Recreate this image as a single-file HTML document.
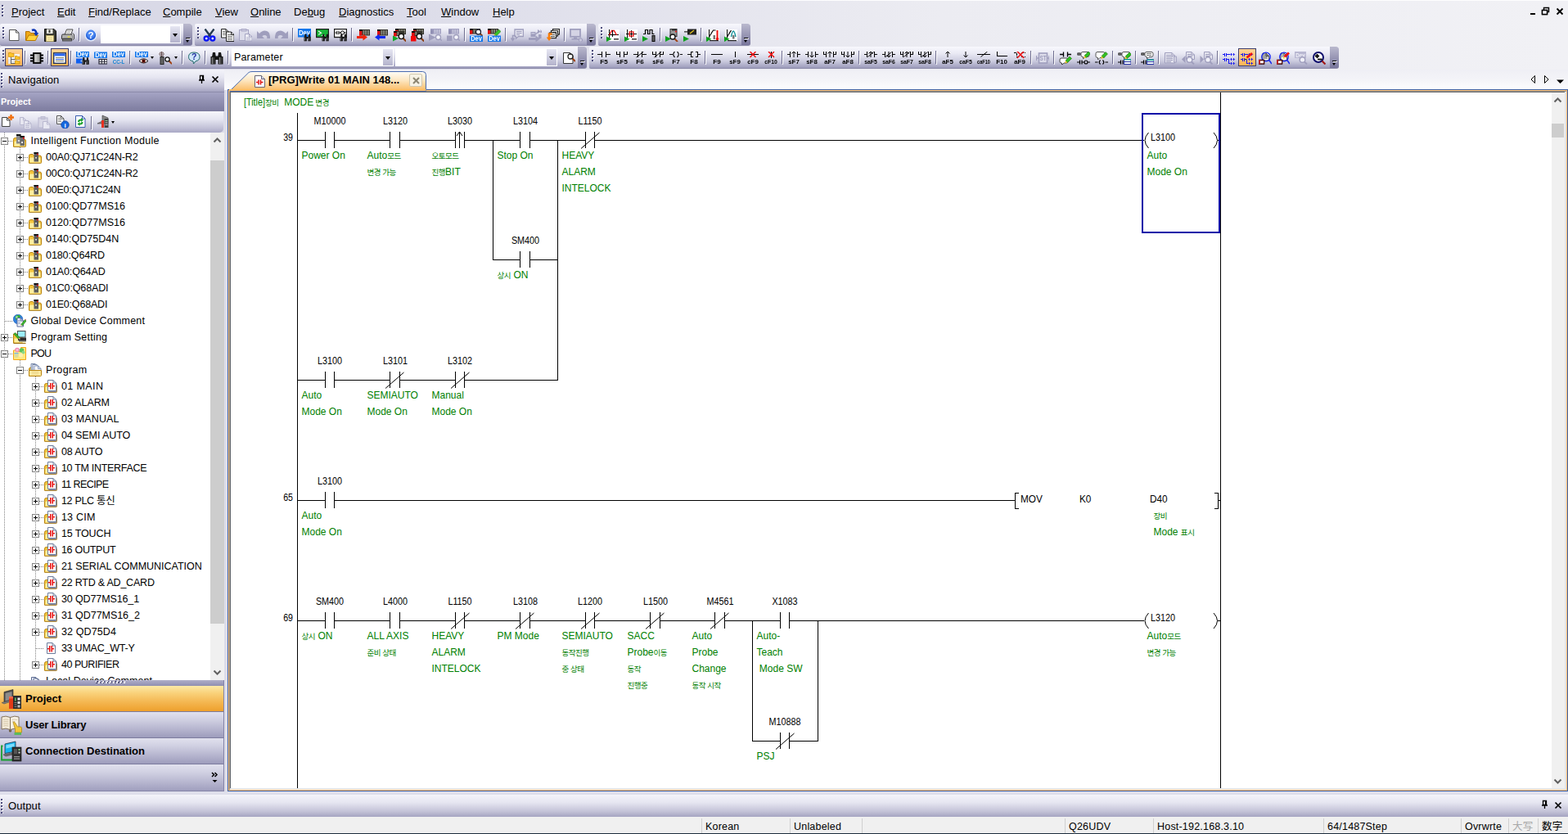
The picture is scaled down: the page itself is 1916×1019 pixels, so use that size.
<!DOCTYPE html><html><head><meta charset="utf-8"><title>MELSOFT GX Works2</title><style>
html,body{margin:0;padding:0}
body{width:1916px;height:1019px;overflow:hidden;position:relative;background:#dddde9;font-family:"Liberation Sans","Noto Sans CJK KR","Noto Sans CJK SC",sans-serif;font-size:12.5px;color:#000;-webkit-font-smoothing:antialiased}
div,span,svg{box-sizing:border-box}
.abs{position:absolute}
#dock{position:absolute;left:0;top:0;width:1916px;height:86px;border-top:1px solid #fdfdfe;background:linear-gradient(to right,#d7d7e5 0%,#dcdce9 25%,#ececf2 60%,#f1f1f5 100%)}
.menu{position:absolute;top:7px;font-size:13px;line-height:16px;white-space:nowrap}
.menu u{text-decoration:underline;text-underline-offset:.5px}
.grip{position:absolute;width:3px;background:repeating-linear-gradient(to bottom,#4c4c7c 0,#4c4c7c 2px,transparent 2px,transparent 4px) 0 0/2px 100% no-repeat,repeating-linear-gradient(to bottom,#fff 0,#fff 2px,transparent 2px,transparent 4px) 1px 1px/2px 100% no-repeat}
.tb{position:absolute;height:27px;border-radius:2px 3px 3px 2px;background:linear-gradient(to bottom,#f8f8fd 0%,#ebebf5 30%,#cbcbde 68%,#9c9bbb 100%);overflow:hidden;border-bottom:1px solid #8b8aa8}
.tb .ico{position:absolute;will-change:transform}
.sep{position:absolute;top:5px;width:1px;height:16px;background:#6e6d8f;margin-left:-1px}.sep:after{content:"";position:absolute;left:1px;top:1px;width:1px;height:16px;background:#fff}
.hot{position:absolute;top:2px;width:22px;height:22px;background:linear-gradient(to bottom,#ffd295,#ffb456);border:1px solid #3c3c6c}
.darr{position:absolute;width:0;height:0;border-style:solid;border-color:#000 transparent transparent transparent;border-width:3px 2.500px 0 2.500px}
.combo{position:absolute;top:2px;height:22px;background:#fff;border:1px solid #fff}
.combo span{position:absolute;left:2px;top:2px;font-size:12.5px;line-height:16px;letter-spacing:.15px}
.cbtn{position:absolute;right:0;top:0;width:12px;height:20px;background:linear-gradient(to bottom,#e6e6f2,#b4b3cc)}
.tbh{position:absolute;right:0;top:0;width:11px;height:27px;background:linear-gradient(to bottom,#bab9ce,#76749a);border-radius:0 3px 3px 0}
.tbhm{position:absolute;left:3px;top:17px;width:5px;height:1px;background:#000;box-shadow:1px 1px 0 #fff}
.tbhm:after{content:"";position:absolute;left:0;top:2.500px;border-style:solid;border-color:#000 transparent transparent transparent;border-width:3px 2.5px 0 2.5px}
#nav{position:absolute;left:0;top:85px;width:274px;height:882px}
.cap{position:absolute;background:linear-gradient(to bottom,#f4f4fa 0%,#e6e6f1 35%,#c4c3d8 75%,#a5a4c1 100%)}
.captxt{position:absolute;font-size:13px;line-height:16px;white-space:nowrap;letter-spacing:.1px}
#projband{position:absolute;left:0;top:27px;width:274px;height:24px;background:linear-gradient(to bottom,#a5a4c4,#7c7b9e);border-top:1px solid #8d8cab}
#projband span{position:absolute;left:1px;top:4px;color:#fff;font-weight:bold;font-size:10.8px;line-height:15px}
#minitb{position:absolute;left:0;top:51px;width:273px;height:26px;background:linear-gradient(to bottom,#f6f6fb 0%,#e4e4f0 40%,#c0bfd6 80%,#a9a8c5 100%);border-radius:0 0 5px 0;z-index:2}
#tree{position:absolute;left:0;top:77px;width:257px;height:669px;background:#fff;overflow:hidden}
.tl{position:absolute;font-size:12.5px;line-height:17px;white-space:nowrap;letter-spacing:.28px}
.vd{position:absolute;width:1px;background:repeating-linear-gradient(to bottom,#808080 0,#808080 1px,transparent 1px,transparent 2px)}
.hd{position:absolute;height:1px;background:repeating-linear-gradient(to right,#808080 0,#808080 1px,transparent 1px,transparent 2px)}
.xb{position:absolute;width:9px;height:9px;border:1px solid #848484;background:#fff}
.xb i{position:absolute;background:#000}
.xb i.h{left:1px;top:3px;width:5px;height:1px}
.xb i.v{left:3px;top:1px;width:1px;height:5px}
#tsb{position:absolute;left:257px;top:77px;width:17px;height:669px;background:#f0f0f0}
.thumb{position:absolute;background:#cdcdcd}
#split{position:absolute;left:0;top:746px;width:274px;height:7px;background:linear-gradient(to bottom,#b0afc9,#8f8eb0)}
.sgrip{position:absolute;left:117px;top:1px;width:36px;height:3px;background:repeating-linear-gradient(115deg,#fff 0,#fff 1.500px,#4a4a70 1.500px,#4a4a70 2.500px,transparent 2.500px,transparent 4px)}
.obtn{position:absolute;left:0;width:274px;height:32px;background:linear-gradient(to bottom,#e1e1ee 0%,#d0d0e2 30%,#b4b3cd 70%,#9d9cbc 100%);border-bottom:1px solid #7c7b9e}
.obtn.sel{background:linear-gradient(to bottom,#fce9a6 0%,#f9d078 30%,#f4b650 65%,#eea02c 100%)}
.obtn.last{height:33px;border-bottom:0}
.obtn span{position:absolute;left:31px;top:8px;font-weight:bold;font-size:13px;line-height:16px;white-space:nowrap}
#tabstrip{position:absolute;left:274px;top:85px;width:1642px;height:25px;background:linear-gradient(to bottom,#efeff5 0%,#f4f4f8 50%,#fdfdfe 100%)}
.tabtxt{z-index:4;position:absolute;left:328px;top:90px;font-weight:bold;font-size:13px;line-height:16px;white-space:nowrap}
.tabx{z-index:4;position:absolute;left:500px;top:90px;width:16px;height:16px;background:#f6f2e4;border:1px solid #cfc8b0;border-radius:2px}
.tabx svg{position:absolute;left:0.500px;top:0.500px}
#frame{position:absolute;left:278px;top:109px;width:1638px;height:858px;border:1px solid #3d62a8;background:#fdbe70;}
#frame:before{content:"";position:absolute;left:1px;top:1px;right:1px;bottom:1px;background:#e6e6e6;border-left:1px solid #8f8f8f;border-top:1px solid #8f8f8f}#frame:after{content:"";position:absolute;left:2px;top:2px;right:3px;bottom:3px;border-left:1px solid #696969;border-top:1px solid #696969}
#view{position:absolute;left:3px;top:3px;width:1614px;height:850px;z-index:1;background:#fff;overflow:hidden}
#vsb{position:absolute;left:1617px;top:3px;width:16px;height:850px;z-index:1;background:#f0f0f0}
#view span{position:absolute;white-space:nowrap;font-size:12px;line-height:14px}
.dv{transform:translateX(-50%) scaleX(.9);color:#000}
.dl{transform:scaleX(.9);transform-origin:0 0;color:#000}
.dn{transform:scaleX(.98);transform-origin:0 0}
.sn{width:28px;text-align:right;transform:scaleX(.88);transform-origin:100% 0}
.cm{color:#008000}
.cm .k,.cm b{font-weight:normal;font-size:9.500px;font-family:"Liberation Sans","Noto Sans CJK KR","NanumGothic",sans-serif;letter-spacing:-.45px}
.cm .nr{font-style:normal;display:inline-block;transform:scaleX(.9);transform-origin:0 0;margin-right:-3px}
svg .aa{shape-rendering:geometricPrecision;fill:none;stroke:#000;stroke-width:1}
#cursor{position:absolute;width:96px;height:147px;border:2px solid #0a0aa8}
#gap{position:absolute;left:0;top:967px;width:1916px;height:4px;background:#dfdfeb}
#status{position:absolute;left:0;top:998px;width:1916px;height:21px;background:#f0f0f0;border-bottom:1px solid #1c2c3c}
.ssep{position:absolute;top:2px;width:1px;height:18px;background:#d0d0d0}
.st{position:absolute;top:4px;font-size:12.500px;line-height:16px;white-space:nowrap;letter-spacing:.2px}
.st.dis{color:#a8a8a8}

</style></head><body>
<div id="dock"></div>
<div class="grip" style="left:2px;top:6px;height:14px"></div>
<div class="menu" style="left:14px"><u>P</u>roject</div>
<div class="menu" style="left:70px"><u>E</u>dit</div>
<div class="menu" style="left:108px"><u>F</u>ind/Replace</div>
<div class="menu" style="left:199px"><u>C</u>ompile</div>
<div class="menu" style="left:263px"><u>V</u>iew</div>
<div class="menu" style="left:306px"><u>O</u>nline</div>
<div class="menu" style="left:359px">De<u>b</u>ug</div>
<div class="menu" style="left:414px"><u>D</u>iagnostics</div>
<div class="menu" style="left:497px"><u>T</u>ool</div>
<div class="menu" style="left:539px"><u>W</u>indow</div>
<div class="menu" style="left:602px"><u>H</u>elp</div>
<svg class="abs" style="left:1866px;top:6px" width="48" height="16" viewBox="0 0 48 16"><rect x="4" y="10" width="6" height="2" fill="#000"/><path d="M20.5 3.5h6v5h-6z M18.5 6.5h6v5h-6z" fill="none" stroke="#000" stroke-width="1.4"/><rect x="18.5" y="6.5" width="6" height="5" fill="#f0f0f5" stroke="#000" stroke-width="1.4"/><path d="M36.5 4.5l7 7M43.5 4.5l-7 7" stroke="#000" stroke-width="1.8"/></svg>
<div class="tb" style="left:0px;top:29px;width:235px">
<div class="grip" style="left:3px;top:4px;height:14px"></div>
<svg class="ico" style="left:10px;top:6px" width="16" height="16" viewBox="0 0 16 16"><path d="M1.5 1.5h8l3.5 3.5v9.5h-11.5z" stroke="#555" stroke-width="1" fill="#fff" /><path d="M9.5 1.5v3.5h3.5" stroke="#555" stroke-width="1" fill="none" /></svg>
<svg class="ico" style="left:31px;top:6px" width="16" height="16" viewBox="0 0 16 16"><path d="M.5 14.5V3.5h4.5l1.500 2H11v2.500" stroke="#b07000" stroke-width="1" fill="#f0a818" /><path d="M.8 14.5l3.200-6.500h11.500l-3.200 6.500z" stroke="#b87800" stroke-width="1" fill="#ffd23c" /><path d="M8 2q4.500-1.800 5.500 3.500" stroke="#0a34b4" stroke-width="2.6" fill="none" /><path d="M10.300 5l6 .3l-3.300 4z" stroke="none" stroke-width="0" fill="#0a34b4" /></svg>
<svg class="ico" style="left:53px;top:6px" width="16" height="16" viewBox="0 0 16 16"><path d="M1.500 .5h11.500l2.500 2.500v12.500h-14z" stroke="#111" stroke-width="1" fill="#3a3a34" /><rect x="4" y="0.5" width="7.5" height="5.5" fill="#f0f0ea" /><rect x="6.5" y="1.5" width="2" height="3.5" fill="#3a3a34" /><rect x="3.5" y="8.5" width="9" height="7" fill="#fff0b4" stroke="#b8a860" stroke-width="0.7" /><rect x="5" y="10.5" width="6" height="1" fill="#d8c880" /><rect x="5" y="12.7" width="6" height="1" fill="#d8c880" /></svg>
<svg class="ico" style="left:75px;top:6px" width="16" height="16" viewBox="0 0 16 16"><path d="M4 7.500l2.500-6.500h7.500l-2.500 6.500" stroke="#444" stroke-width="1" fill="#fff" /><path d="M7 3h4.500M6.300 5h4.500" stroke="#999" stroke-width="0.9" fill="none" /><path d="M.5 8.500q0-1.500 1.500-1.500h10q1.500 0 1.500 1.500v4h-13z" stroke="#333" stroke-width="1" fill="#b4b4b4" /><rect x="1.5" y="12.5" width="11" height="2.5" fill="#7c7c7c" stroke="#333" stroke-width="0.8" /><rect x="7.5" y="9.5" width="3" height="1.3" fill="#f4ec10" /><path d="M13.500 5.500l2 1.500v5.500l-2 1.500" stroke="#444" stroke-width="1" fill="#d0d0d0" /><rect x="2" y="10.8" width="10" height="1" fill="#888" /></svg>
<div class="sep" style="left:97px"></div>
<svg class="ico" style="left:103px;top:6px" width="16" height="16" viewBox="0 0 16 16"><circle cx="8" cy="8" r="6.8" fill="#2a66dc" stroke="#e4ecfc" stroke-width="1.3"/><circle cx="8" cy="6.5" r="5" fill="#4a86f0"/><text x="8" y="12.3" font-size="11.5" font-weight="bold" fill="#fff" text-anchor="middle" font-family="Liberation Sans,sans-serif" >?</text></svg>
<div class="combo" style="left:123px;width:98px"><span></span><div class="cbtn"><div class="darr" style="left:3px;top:9px;border-width:4px 3.5px 0 3.5px"></div></div></div>
<div class="tbh"><div class="tbhm"></div></div>
</div>
<div class="tb" style="left:238px;top:29px;width:490px">
<div class="grip" style="left:3px;top:4px;height:14px"></div>
<svg class="ico" style="left:10px;top:6px" width="16" height="16" viewBox="0 0 16 16"><path d="M2.500 .5L9.200 9.500M13.500 .5L6.800 9.500" stroke="#22384e" stroke-width="2.3" fill="none" /><circle cx="4.2" cy="12" r="2.6" fill="#dfe3ff" stroke="#0a14f4" stroke-width="2.2"/><circle cx="11.8" cy="12" r="2.6" fill="#dfe3ff" stroke="#0a14f4" stroke-width="2.2"/></svg>
<svg class="ico" style="left:32px;top:6px" width="16" height="16" viewBox="0 0 16 16"><path d="M0.5 0.5h5.5l3.5 3.5v7.0h-9.0z" stroke="#222" stroke-width="1" fill="#fff" /><path d="M6.0 0.5v3.5h3.5" stroke="#222" stroke-width="1" fill="none" /><path d="M2 3.500h3M2 5.500h5M2 7.500h5" stroke="#666" stroke-width="0.9" fill="none" /><path d="M6.5 4.0h6l3.5 3.5v8.0h-9.5z" stroke="#222" stroke-width="1" fill="#fff" /><path d="M12.5 4.0v3.5h3.5" stroke="#222" stroke-width="1" fill="none" /><path d="M8 7.500h4M8 9.500h6M8 11.500h6M8 13.500h6" stroke="#666" stroke-width="0.9" fill="none" /></svg>
<svg class="ico" style="left:54px;top:6px" width="16" height="16" viewBox="0 0 16 16"><rect x="0.5" y="1.5" width="11" height="13" fill="#dcdcea" stroke="#a5a4c2" stroke-width="1" /><rect x="3" y="0.5" width="6" height="2.5" fill="#c8c7dc" stroke="#a5a4c2" stroke-width="0.8" /><path d="M7.5 6.5h5l3.5 3.5v5.0h-8.5z" stroke="#a5a4c2" stroke-width="1" fill="#ececf4" /><path d="M12.5 6.5v3.5h3.5" stroke="#a5a4c2" stroke-width="1" fill="none" /><rect x="9" y="10.5" width="5" height="1" fill="#b4b3cc" /><rect x="9" y="12.5" width="5" height="1" fill="#b4b3cc" /></svg>
<svg class="ico" style="left:76px;top:6px" width="16" height="16" viewBox="0 0 16 16"><path d="M0 3V12H9L6.300 9.300Q9.500 6.800 12.300 9.500V12H16V9.500Q15.500 2.500 9.500 2.500Q5.800 2.500 3 6z" stroke="none" stroke-width="0" fill="#9f9ebd" /></svg>
<svg class="ico" style="left:98px;top:6px" width="16" height="16" viewBox="0 0 16 16"><path d="M16 3V12H7L9.700 9.300Q6.500 6.800 3.700 9.500V12H0V9.500Q.5 2.500 6.500 2.500Q10.200 2.500 13 6z" stroke="none" stroke-width="0" fill="#9f9ebd" /></svg>
<div class="sep" style="left:120px"></div>
<svg class="ico" style="left:126px;top:6px" width="16" height="16" viewBox="0 0 16 16"><rect x="0" y="0" width="16" height="10.5" fill="#1478ec" /><text x="8.0" y="7.6" font-size="8.6" font-weight="bold" fill="#fff" text-anchor="middle" font-family="Liberation Sans,sans-serif" textLength="13.5" lengthAdjust="spacingAndGlyphs">Dev</text><rect x="7.5" y="9.8" width="3.4" height="5.5" fill="#161616" /><rect x="12.3" y="9.8" width="3.4" height="5.5" fill="#161616" /><rect x="8.2" y="6.8" width="2.2" height="3.5" fill="#161616" /><rect x="12.8" y="6.8" width="2.2" height="3.5" fill="#161616" /><rect x="10.5" y="10.0" width="2.2" height="2.2" fill="#161616" /><rect x="8.1" y="10.8" width="0.9" height="3.6" fill="#6a6a6a" /><rect x="12.9" y="10.8" width="0.9" height="3.6" fill="#6a6a6a" /></svg>
<svg class="ico" style="left:148px;top:6px" width="16" height="16" viewBox="0 0 16 16"><rect x="0.5" y="0.5" width="15" height="10" fill="#18b438" stroke="#1c1c1c" stroke-width="1.4" /><path d="M3 3l3.500 2.200l-3.500 2.200M7 8.300h4" stroke="#fff" stroke-width="1.1" fill="none" /><rect x="7.5" y="9.8" width="3.4" height="5.5" fill="#161616" /><rect x="12.3" y="9.8" width="3.4" height="5.5" fill="#161616" /><rect x="8.2" y="6.8" width="2.2" height="3.5" fill="#161616" /><rect x="12.8" y="6.8" width="2.2" height="3.5" fill="#161616" /><rect x="10.5" y="10.0" width="2.2" height="2.2" fill="#161616" /><rect x="8.1" y="10.8" width="0.9" height="3.6" fill="#6a6a6a" /><rect x="12.9" y="10.8" width="0.9" height="3.6" fill="#6a6a6a" /></svg>
<svg class="ico" style="left:170px;top:6px" width="16" height="16" viewBox="0 0 16 16"><rect x="0.5" y="0.5" width="15" height="10" fill="#fff" stroke="#1c1c1c" stroke-width="1.4" /><path d="M1.500 5h2M3.800 2.800v4.400M6 2.800v4.400M6 5h2.200M12.800 5h2" stroke="#000" stroke-width="1" fill="none" /><circle cx="10.5" cy="5" r="2.1" fill="none" stroke="#000" stroke-width="1"/><rect x="7.5" y="9.8" width="3.4" height="5.5" fill="#161616" /><rect x="12.3" y="9.8" width="3.4" height="5.5" fill="#161616" /><rect x="8.2" y="6.8" width="2.2" height="3.5" fill="#161616" /><rect x="12.8" y="6.8" width="2.2" height="3.5" fill="#161616" /><rect x="10.5" y="10.0" width="2.2" height="2.2" fill="#161616" /><rect x="8.1" y="10.8" width="0.9" height="3.6" fill="#6a6a6a" /><rect x="12.9" y="10.8" width="0.9" height="3.6" fill="#6a6a6a" /></svg>
<div class="sep" style="left:192px"></div>
<svg class="ico" style="left:198px;top:6px" width="16" height="16" viewBox="0 0 16 16"><rect x="3" y="1" width="13" height="7.5" fill="#34342c" /><rect x="3" y="2.5" width="3.4" height="6.0" fill="#e01010" /><rect x="3" y="1" width="3.4" height="1.8" fill="#000" /><rect x="7.6" y="2" width="1.7" height="5.5" fill="#8c8c80" /><rect x="10.3" y="2" width="1.7" height="5.5" fill="#8c8c80" /><rect x="13" y="2" width="1.7" height="5.5" fill="#8c8c80" /><path d="M0 10.500h8" stroke="#f02408" stroke-width="3" fill="none" /><path d="M7.500 6.500l5.500 4l-5.500 4z" stroke="none" stroke-width="0" fill="#f02408" /></svg>
<svg class="ico" style="left:220px;top:6px" width="16" height="16" viewBox="0 0 16 16"><rect x="3" y="1" width="13" height="7.5" fill="#34342c" /><rect x="3" y="2.5" width="3.4" height="6.0" fill="#e01010" /><rect x="3" y="1" width="3.4" height="1.8" fill="#000" /><rect x="7.6" y="2" width="1.7" height="5.5" fill="#8c8c80" /><rect x="10.3" y="2" width="1.7" height="5.5" fill="#8c8c80" /><rect x="13" y="2" width="1.7" height="5.5" fill="#8c8c80" /><path d="M13 10.500h-8" stroke="#0c2cf0" stroke-width="3" fill="none" /><path d="M5.500 6.500l-5.500 4l5.500 4z" stroke="none" stroke-width="0" fill="#0c2cf0" /></svg>
<svg class="ico" style="left:242px;top:6px" width="16" height="16" viewBox="0 0 16 16"><rect x="3" y="0" width="13" height="7" fill="#34342c" /><rect x="3" y="1.5" width="3.4" height="5.5" fill="#e01010" /><rect x="3" y="0" width="3.4" height="1.8" fill="#000" /><rect x="7.6" y="1" width="1.7" height="5" fill="#8c8c80" /><rect x="10.3" y="1" width="1.7" height="5" fill="#8c8c80" /><rect x="13" y="1" width="1.7" height="5" fill="#8c8c80" /><rect x="1" y="3" width="13" height="6" fill="#34342c" /><rect x="1" y="4.5" width="3.6" height="5" fill="#e01010" /><rect x="1" y="3" width="3.6" height="1.8" fill="#000" /><rect x="5.5" y="4" width="1.7" height="4" fill="#8c8c80" /><path d="M0 8.5l7 3.5l-7 3.5z" stroke="none" stroke-width="0" fill="#10a828" /><path d="M12.47 11.67L16.4 15.6" stroke="#8a3c10" stroke-width="2" fill="none" /><circle cx="10.3" cy="9.5" r="3.1" fill="#fff" stroke="#111" stroke-width="1.3"/></svg>
<svg class="ico" style="left:264px;top:6px" width="16" height="16" viewBox="0 0 16 16"><rect x="3" y="0" width="13" height="7" fill="#34342c" /><rect x="3" y="1.5" width="3.4" height="5.5" fill="#e01010" /><rect x="3" y="0" width="3.4" height="1.8" fill="#000" /><rect x="7.6" y="1" width="1.7" height="5" fill="#8c8c80" /><rect x="10.3" y="1" width="1.7" height="5" fill="#8c8c80" /><rect x="13" y="1" width="1.7" height="5" fill="#8c8c80" /><rect x="1" y="3" width="13" height="6" fill="#34342c" /><rect x="1" y="4.5" width="3.6" height="5" fill="#e01010" /><rect x="1" y="3" width="3.6" height="1.8" fill="#000" /><rect x="5.5" y="4" width="1.7" height="4" fill="#8c8c80" /><rect x="0" y="9" width="6.5" height="6.5" fill="#f40808" /><path d="M12.47 11.67L16.4 15.6" stroke="#8a3c10" stroke-width="2" fill="none" /><circle cx="10.3" cy="9.5" r="3.1" fill="#fff" stroke="#111" stroke-width="1.3"/></svg>
<svg class="ico" style="left:286px;top:6px" width="16" height="16" viewBox="0 0 16 16"><rect x="2" y="0" width="13" height="6.5" fill="#a3a2c2" /><rect x="2" y="1.5" width="3.4" height="5.0" fill="#9190b4" /><rect x="6.6" y="1" width="1.7" height="4.5" fill="#c4c3d9" /><rect x="9.3" y="1" width="1.7" height="4.5" fill="#c4c3d9" /><rect x="12" y="1" width="1.7" height="4.5" fill="#c4c3d9" /><path d="M0 6.5l8.5 4.25l-8.5 4.25z" stroke="none" stroke-width="0" fill="#9f9ebd" /><path d="M6 10.500h3" stroke="#9f9ebd" stroke-width="1" fill="none" /><circle cx="11.5" cy="10.5" r="3" fill="#f4f4fa" stroke="#9f9ebd" stroke-width="1.3"/><path d="M13.800 12.800l2 2" stroke="#9f9ebd" stroke-width="1.5" fill="none" /></svg>
<svg class="ico" style="left:308px;top:6px" width="16" height="16" viewBox="0 0 16 16"><rect x="2" y="0" width="13" height="6.5" fill="#a3a2c2" /><rect x="2" y="1.5" width="3.4" height="5.0" fill="#9190b4" /><rect x="6.6" y="1" width="1.7" height="4.5" fill="#c4c3d9" /><rect x="9.3" y="1" width="1.7" height="4.5" fill="#c4c3d9" /><rect x="12" y="1" width="1.7" height="4.5" fill="#c4c3d9" /><rect x="0" y="8.5" width="6.5" height="6.5" fill="#9f9ebd" /><circle cx="11.5" cy="10.5" r="3" fill="#f4f4fa" stroke="#9f9ebd" stroke-width="1.3"/><path d="M13.800 12.800l2 2" stroke="#9f9ebd" stroke-width="1.5" fill="none" /></svg>
<div class="sep" style="left:330px"></div>
<svg class="ico" style="left:336px;top:6px" width="16" height="16" viewBox="0 0 16 16"><rect x="0" y="0" width="13" height="6.5" fill="#34342c" /><rect x="0" y="1.5" width="3.4" height="5.0" fill="#e01010" /><rect x="0" y="0" width="3.4" height="1.8" fill="#000" /><rect x="4.6" y="1" width="1.7" height="4.5" fill="#8c8c80" /><rect x="7.3" y="1" width="1.7" height="4.5" fill="#8c8c80" /><rect x="10" y="1" width="1.7" height="4.5" fill="#8c8c80" /><path d="M12.6 6.1L16.5 10" stroke="#8a3c10" stroke-width="2" fill="none" /><circle cx="10.5" cy="4" r="3" fill="#fff" stroke="#223" stroke-width="1.3"/><rect x="0" y="8.5" width="16" height="7.5" fill="#1478ec" /><text x="8.0" y="15.4" font-size="8.4" font-weight="bold" fill="#fff" text-anchor="middle" font-family="Liberation Sans,sans-serif" textLength="13.5" lengthAdjust="spacingAndGlyphs">Dev</text></svg>
<svg class="ico" style="left:358px;top:6px" width="16" height="16" viewBox="0 0 16 16"><rect x="0" y="0" width="13" height="6.5" fill="#34342c" /><rect x="0" y="1.5" width="3.4" height="5.0" fill="#e01010" /><rect x="0" y="0" width="3.4" height="1.8" fill="#000" /><rect x="4.6" y="1" width="1.7" height="4.5" fill="#8c8c80" /><rect x="7.3" y="1" width="1.7" height="4.5" fill="#8c8c80" /><rect x="10" y="1" width="1.7" height="4.5" fill="#8c8c80" /><path d="M8 6.500l5.500-5.500l2.500 2.500l-5.500 5.500z" stroke="#1c6c10" stroke-width="0.5" fill="#38c428" /><path d="M8 6.500l2.500 2.500l-3.300 .8z" stroke="none" stroke-width="0" fill="#e8c020" /><rect x="0" y="8.5" width="16" height="7.5" fill="#1478ec" /><text x="8.0" y="15.4" font-size="8.4" font-weight="bold" fill="#fff" text-anchor="middle" font-family="Liberation Sans,sans-serif" textLength="13.5" lengthAdjust="spacingAndGlyphs">Dev</text></svg>
<div class="sep" style="left:380px"></div>
<svg class="ico" style="left:386px;top:6px" width="16" height="16" viewBox="0 0 16 16"><path d="M5 1h10.500v8.500h-6l-3 2.500v-2.500h-1.500z" stroke="#9f9ebd" stroke-width="1.3" fill="#e6e6f0" /><path d="M7 3.500h6.500M7 5.500h6.500M7 7.500h4" stroke="#9f9ebd" stroke-width="1.2" fill="none" /><path d="M6 8.500h-3.500v5M.5 11.500l2 3l2-3" stroke="#9f9ebd" stroke-width="1.5" fill="none" /></svg>
<svg class="ico" style="left:408px;top:6px" width="16" height="16" viewBox="0 0 16 16"><rect x="2.5" y="4" width="6" height="6" fill="#9f9ebd" /><rect x="3.5" y="5" width="4" height="1.5" fill="#c8c7dc" /><path d="M11 1l3.500 2.500l-3.500 2.500zM14.500 1l2 2.500l-2 2.500z" stroke="none" stroke-width="0" fill="#9f9ebd" /><rect x="12" y="7" width="3.5" height="5" fill="#9f9ebd" /><path d="M8 7l4-3" stroke="#9f9ebd" stroke-width="1.5" fill="none" /><path d="M0 12.500h9" stroke="#9f9ebd" stroke-width="3" fill="none" /><path d="M8.500 8.500l5.500 4l-5.500 4z" stroke="none" stroke-width="0" fill="#9f9ebd" /></svg>
<svg class="ico" style="left:430px;top:6px" width="16" height="16" viewBox="0 0 16 16"><rect x="7.5" y="0.5" width="8" height="6.5" fill="#fff" stroke="#222" stroke-width="1.2" /><rect x="5.5" y="2.5" width="8" height="6.5" fill="#fff" stroke="#222" stroke-width="1.2" /><path d="M7 2.500h7M7 4.500h5" stroke="#444" stroke-width="1" fill="none" /><rect x="3.5" y="5" width="8" height="6.5" fill="#fff" stroke="#222" stroke-width="1.2" /><path d="M5 7.500h5M5 9.500h5" stroke="#555" stroke-width="1" fill="none" /><path d="M6.500 6.500h-3.500v5.500" stroke="#f87c08" stroke-width="2.6" fill="none" /><path d="M-.3 10.500h6.600l-3.300 4.500z" stroke="none" stroke-width="0" fill="#f87c08" /></svg>
<div class="sep" style="left:452px"></div>
<svg class="ico" style="left:458px;top:6px" width="16" height="16" viewBox="0 0 16 16"><rect x="1" y="0.8" width="12" height="9" fill="#d4d3e4" stroke="#9f9ebd" stroke-width="1.8" /><rect x="5" y="10.5" width="4" height="1.5" fill="#9f9ebd" /><rect x="2.5" y="12" width="9" height="1.6" fill="#9f9ebd" /><path d="M11 12.500q2.500-1 4 0" stroke="#9f9ebd" stroke-width="1" fill="none" /><circle cx="13.5" cy="14" r="2.2" fill="#c8c7dc" stroke="#9f9ebd" stroke-width="1"/></svg>
<div class="tbh"><div class="tbhm"></div></div>
</div>
<div class="tb" style="left:731px;top:29px;width:186px">
<div class="grip" style="left:3px;top:4px;height:14px"></div>
<svg class="ico" style="left:10px;top:6px" width="16" height="16" viewBox="0 0 16 16"><rect x="1" y="1" width="15" height="14" fill="#fff" /><path d="M3.5 1v13M2 7.5h13" stroke="#000" stroke-width="1" fill="none" /><path d="M3.5 8l3-5.5h3l3 5.5" stroke="#f01010" stroke-width="1.3" fill="none" /><path d="M7.5 2v8" stroke="#000" stroke-width="1" fill="none" /><path d="M0 9.5l6.5 3.25l-6.5 3.25z" stroke="none" stroke-width="0" fill="#10a020" /><rect x="9" y="12" width="6" height="1.6" fill="#444" /></svg>
<svg class="ico" style="left:32px;top:6px" width="16" height="16" viewBox="0 0 16 16"><rect x="1" y="1" width="15" height="14" fill="#fff" /><path d="M3.5 1v13M2 6.5h13M8.5 2v9" stroke="#000" stroke-width="1" fill="none" /><rect x="6" y="4" width="5" height="5" fill="none" stroke="#f01010" stroke-width="1.3" /><path d="M0 9.5l6.5 3.25l-6.5 3.25z" stroke="none" stroke-width="0" fill="#10a020" /><rect x="9" y="12" width="6" height="1.6" fill="#444" /></svg>
<svg class="ico" style="left:54px;top:6px" width="16" height="16" viewBox="0 0 16 16"><path d="M1 6.5h2.5v-5h3v5h2.5v-5h3v5h2.5" stroke="#000" stroke-width="1.2" fill="none" /><path d="M0 9l7 3.5l-7 3.5z" stroke="none" stroke-width="0" fill="#10a020" /><rect x="12" y="8.5" width="3" height="7" fill="#666" stroke="#000" stroke-width="1" /></svg>
<div class="sep" style="left:76px"></div>
<svg class="ico" style="left:82px;top:6px" width="16" height="16" viewBox="0 0 16 16"><rect x="6" y="0.5" width="8" height="9" fill="#999" stroke="#333" stroke-width="1" /><rect x="8" y="0.5" width="6" height="2" fill="#333" /><circle cx="13" cy="3.5" r="1" fill="#f01010"/><path d="M0 9l7 3.5l-7 3.5z" stroke="none" stroke-width="0" fill="#10a020" /><path d="M11.1 12.1L15 16" stroke="#a04010" stroke-width="2" fill="none" /><circle cx="9" cy="10" r="3" fill="#fff" stroke="#111" stroke-width="1.3"/></svg>
<svg class="ico" style="left:104px;top:6px" width="16" height="16" viewBox="0 0 16 16"><rect x="5" y="0.5" width="11" height="7" fill="#222" /><path d="M8 6l5-4" stroke="#e0c020" stroke-width="1.4" fill="none" /><rect x="1" y="3" width="4" height="1.6" fill="#555" /><path d="M0 9l7 3.5l-7 3.5z" stroke="none" stroke-width="0" fill="#10a020" /></svg>
<div class="sep" style="left:126px"></div>
<svg class="ico" style="left:132px;top:6px" width="16" height="16" viewBox="0 0 16 16"><rect x="1" y="1" width="15" height="14" fill="#fff" /><path d="M3.5 1v13" stroke="#000" stroke-width="1" fill="none" /><path d="M3.5 10l5-8h3" stroke="#000" stroke-width="1.2" fill="none" /><rect x="8.5" y="8" width="2.5" height="5" fill="#777" /><path d="M13.5 2v9" stroke="#f01010" stroke-width="2" fill="none" /><circle cx="13.5" cy="12.5" r="1.8" fill="#f01010"/><path d="M0 9.5l6.5 3.25l-6.5 3.25z" stroke="none" stroke-width="0" fill="#10a020" /><rect x="4" y="14" width="11" height="1.2" fill="#222" /></svg>
<svg class="ico" style="left:154px;top:6px" width="16" height="16" viewBox="0 0 16 16"><rect x="1" y="1" width="15" height="14" fill="#fff" /><path d="M3.5 1v13" stroke="#000" stroke-width="1" fill="none" /><path d="M3.5 10l5-8" stroke="#000" stroke-width="1.2" fill="none" /><path d="M8.5 10q2.5-14 5.5 0" stroke="#10909a" stroke-width="1.4" fill="none" /><rect x="10" y="8" width="2.5" height="4.5" fill="#777" /><path d="M0 9.5l6.5 3.25l-6.5 3.25z" stroke="none" stroke-width="0" fill="#10a020" /><rect x="4" y="14" width="11" height="1.2" fill="#222" /></svg>
<div class="tbh"><div class="tbhm"></div></div>
</div>
<div class="tb" style="left:0px;top:57px;width:717px">
<div class="grip" style="left:3px;top:4px;height:14px"></div>
<div class="hot" style="left:6px"></div>
<svg class="ico" style="left:9px;top:6px" width="16" height="16" viewBox="0 0 16 16"><rect x="1" y="3" width="14" height="12" fill="#f4f4f4" /><rect x="1" y="9" width="14" height="6" fill="#e4e4e4" /><path d="M4.500 6v8.500h5M4.500 9h5" stroke="#666" stroke-width="1" fill="none" shape-rendering="crispEdges"/><path d="M1.500 1.500h3l.8 .8h2.700v4.200h-6.500z" stroke="#c88a08" stroke-width="0.7" fill="#ffc428" /><path d="M9.500 5.500h2.500l.6 .8h2.400v3.200h-5.500z" stroke="#c88a08" stroke-width="0.7" fill="#ffc428" /><path d="M9.500 11h2.500l.6 .8h2.400v3.200h-5.500z" stroke="#c88a08" stroke-width="0.7" fill="#ffc428" /></svg>
<div class="sep" style="left:31px"></div>
<svg class="ico" style="left:37px;top:6px" width="16" height="16" viewBox="0 0 16 16"><rect x="4" y="2" width="8.5" height="12" fill="#a8a8a8" stroke="#000" stroke-width="1.8" /><rect x="5.5" y="3.5" width="3" height="9" fill="#c8c8c8" /><path d="M0 4.500h3.500M0 8h3.500M0 11.500h3.500M12.500 4.500h3.500M12.500 8h3.500M12.500 11.500h3.500" stroke="#000" stroke-width="1.8" fill="none" /></svg>
<div class="sep" style="left:59px"></div>
<div class="hot" style="left:62px"></div>
<svg class="ico" style="left:65px;top:6px" width="16" height="16" viewBox="0 0 16 16"><rect x="0.7" y="1.7" width="14.6" height="12.6" fill="#fff" stroke="#2a3a5c" stroke-width="1.4" /><rect x="1.4" y="2.4" width="13.2" height="3" fill="#2a66f0" /><path d="M3 7.500h10M3 11.500h10" stroke="#8c8c70" stroke-width="1" fill="none" /><path d="M3 9.500h10" stroke="#3c6cf0" stroke-width="1.2" fill="none" /></svg>
<div class="sep" style="left:87px"></div>
<svg class="ico" style="left:93px;top:6px" width="16" height="16" viewBox="0 0 16 16"><rect x="0" y="0" width="16" height="7" fill="#1478ec" /><text x="8.0" y="6.4" font-size="8.4" font-weight="bold" fill="#fff" text-anchor="middle" font-family="Liberation Sans,sans-serif" textLength="13.5" lengthAdjust="spacingAndGlyphs">Dev</text><rect x="0" y="8.5" width="9" height="6" fill="#1060f0" /><path d="M5 11.500l3-2v4z" stroke="none" stroke-width="0" fill="#9cc4ff" /><rect x="7.5" y="10.3" width="3.4" height="5.5" fill="#161616" /><rect x="12.3" y="10.3" width="3.4" height="5.5" fill="#161616" /><rect x="8.2" y="7.3" width="2.2" height="3.5" fill="#161616" /><rect x="12.8" y="7.3" width="2.2" height="3.5" fill="#161616" /><rect x="10.5" y="10.5" width="2.2" height="2.2" fill="#161616" /><rect x="8.1" y="11.3" width="0.9" height="3.6" fill="#6a6a6a" /><rect x="12.9" y="11.3" width="0.9" height="3.6" fill="#6a6a6a" /></svg>
<svg class="ico" style="left:115px;top:6px" width="16" height="16" viewBox="0 0 16 16"><rect x="0" y="0.5" width="16" height="7.5" fill="#1478ec" /><text x="8.0" y="7.4" font-size="8.4" font-weight="bold" fill="#fff" text-anchor="middle" font-family="Liberation Sans,sans-serif" textLength="13.5" lengthAdjust="spacingAndGlyphs">Dev</text><rect x="6" y="9.5" width="10" height="5.5" fill="#fff" stroke="#2c2c3c" stroke-width="1.2" /><path d="M6 12.200h10M9.300 9.500v5.500M12.600 9.500v5.500" stroke="#2c2c3c" stroke-width="1.1" fill="none" /></svg>
<svg class="ico" style="left:137px;top:6px" width="16" height="16" viewBox="0 0 16 16"><rect x="0" y="0" width="16" height="7" fill="#1478ec" /><text x="8.0" y="6.4" font-size="8.4" font-weight="bold" fill="#fff" text-anchor="middle" font-family="Liberation Sans,sans-serif" textLength="13.5" lengthAdjust="spacingAndGlyphs">Dev</text><text x="8" y="14.6" font-size="7.8" font-weight="bold" fill="#1484d4" text-anchor="middle" font-family="Liberation Sans,sans-serif" textLength="14.5" lengthAdjust="spacingAndGlyphs">CC-L</text></svg>
<div class="sep" style="left:159px"></div>
<svg class="ico" style="left:165px;top:6px" width="16" height="16" viewBox="0 0 16 16"><rect x="0" y="0" width="16" height="7" fill="#1478ec" /><text x="8.0" y="6.4" font-size="8.4" font-weight="bold" fill="#fff" text-anchor="middle" font-family="Liberation Sans,sans-serif" textLength="13.5" lengthAdjust="spacingAndGlyphs">Dev</text><path d="M5 11.500q5.500-5.500 11 0q-5.500 5-11 0z" stroke="#111" stroke-width="1" fill="#fff" /><circle cx="10.5" cy="11.5" r="2.3" fill="#6c1408"/><circle cx="10.5" cy="11.5" r="0.9" fill="#200"/></svg>
<div class="darr" style="left:184px;top:12px"></div>
<svg class="ico" style="left:194px;top:6px" width="16" height="16" viewBox="0 0 16 16"><path d="M3.5 0v6M0 3h7M1 1.5q2.5-1.5 5 0M1 4.5q2.5 1.5 5 0" stroke="#604848" stroke-width="0.9" fill="none" /><rect x="2" y="6.5" width="4" height="9" fill="#666" stroke="#222" stroke-width="1" /><path d="M12.32 11.32L16.1 15.1" stroke="#a04010" stroke-width="2" fill="none" /><circle cx="10.5" cy="9.5" r="2.6" fill="#fff" stroke="#111" stroke-width="1.3"/></svg>
<div class="darr" style="left:213px;top:12px"></div>
<div class="sep" style="left:223px"></div>
<svg class="ico" style="left:229px;top:6px" width="16" height="16" viewBox="0 0 16 16"><path d="M8 1q7 0 7 5.5q0 4.5-5 5.3l-2.5 3.2l-.5-3.2q-5.5-.8-5.5-5.3q0-5.5 6.5-5.500z" stroke="#206868" stroke-width="1" fill="#cfe6fa" /><text x="8.3" y="9.8" font-size="10.5" font-weight="bold" fill="#2030a0" text-anchor="middle" font-family="Liberation Sans,sans-serif" font-family="Liberation Serif,serif">?</text></svg>
<div class="sep" style="left:251px"></div>
<svg class="ico" style="left:257px;top:6px" width="16" height="16" viewBox="0 0 16 16"><rect x="0.5" y="6" width="6" height="9.5" fill="#141414" /><rect x="9.5" y="6" width="6" height="9.5" fill="#141414" /><path d="M2 6.500l1-5.500h3l.8 5.500zM9.200 6.500l.8-5.500h3l1 5.500z" stroke="none" stroke-width="0" fill="#141414" /><rect x="6" y="5.5" width="4" height="4.5" fill="#141414" /><rect x="1.8" y="7" width="1.4" height="8" fill="#8c8c8c" /><rect x="3.8" y="7" width="1" height="8" fill="#555" /><rect x="10.8" y="7" width="1.4" height="8" fill="#8c8c8c" /><rect x="12.8" y="7" width="1" height="8" fill="#555" /></svg>
<div class="sep" style="left:279px"></div>
<div class="combo" style="left:283px;width:198px"><span>Parameter</span><div class="cbtn"><div class="darr" style="left:3px;top:9px;border-width:4px 3.5px 0 3.5px"></div></div></div>
<div class="combo" style="left:483px;width:198px"><span></span><div class="cbtn"><div class="darr" style="left:3px;top:9px;border-width:4px 3.5px 0 3.5px"></div></div></div>
<svg class="ico" style="left:687px;top:6px" width="16" height="16" viewBox="0 0 16 16"><path d="M1.5 1.5h8l3.5 3.5v9.5h-11.5z" stroke="#333" stroke-width="1" fill="#fff" /><path d="M9.5 1.5v3.5h3.5" stroke="#333" stroke-width="1" fill="none" /><path d="M12.1 8.1L16 12" stroke="#a04010" stroke-width="2" fill="none" /><circle cx="10" cy="6" r="3" fill="#fff" stroke="#222" stroke-width="1.3"/></svg>
<div class="tbh"><div class="tbhm"></div></div>
</div>
<div class="tb" style="left:720px;top:57px;width:916px">
<div class="grip" style="left:3px;top:4px;height:14px"></div>
<svg class="ico" style="left:10px;top:6px" width="16" height="16" viewBox="0 0 16 16"><path d="M0 3.5H5.5M10.5 3.5H16M5.5 0.0V7.0M10.5 0.0V7.0" stroke="#000" stroke-width="1" fill="none" shape-rendering="crispEdges"/><text x="8" y="14.9" font-size="7.4" font-weight="bold" fill="#000" text-anchor="middle" font-family="Liberation Sans,sans-serif" textLength="9.4" lengthAdjust="spacingAndGlyphs">F5</text></svg>
<svg class="ico" style="left:32px;top:6px" width="16" height="16" viewBox="0 0 16 16"><path d="M1.5 0.0V3.5H5.5M5.5 0.0V7.0M10.5 0.0V7.0M10.5 3.5H14.5V0.0" stroke="#000" stroke-width="1" fill="none" shape-rendering="crispEdges"/><text x="8" y="14.9" font-size="7.4" font-weight="bold" fill="#000" text-anchor="middle" font-family="Liberation Sans,sans-serif" textLength="13.6" lengthAdjust="spacingAndGlyphs">sF5</text></svg>
<svg class="ico" style="left:54px;top:6px" width="16" height="16" viewBox="0 0 16 16"><path d="M0 3.5H5.5M10.5 3.5H16M5.5 0.0V7.0M10.5 0.0V7.0" stroke="#000" stroke-width="1" fill="none" shape-rendering="crispEdges"/><path d="M3.5 7.0L12.5 0.0" stroke="#000" stroke-width="1" fill="none" /><text x="8" y="14.9" font-size="7.4" font-weight="bold" fill="#000" text-anchor="middle" font-family="Liberation Sans,sans-serif" textLength="9.4" lengthAdjust="spacingAndGlyphs">F6</text></svg>
<svg class="ico" style="left:76px;top:6px" width="16" height="16" viewBox="0 0 16 16"><path d="M1.5 0.0V3.5H5.5M5.5 0.0V7.0M10.5 0.0V7.0M10.5 3.5H14.5V0.0" stroke="#000" stroke-width="1" fill="none" shape-rendering="crispEdges"/><path d="M3.5 7.0L12.5 0.0" stroke="#000" stroke-width="1" fill="none" /><text x="8" y="14.9" font-size="7.4" font-weight="bold" fill="#000" text-anchor="middle" font-family="Liberation Sans,sans-serif" textLength="13.6" lengthAdjust="spacingAndGlyphs">sF6</text></svg>
<svg class="ico" style="left:98px;top:6px" width="16" height="16" viewBox="0 0 16 16"><path d="M0 3.5h3.5M12.5 3.5h3.5" stroke="#000" stroke-width="1" fill="none" shape-rendering="crispEdges"/><path d="M6.5 0q-3.5 3.500 0 7M9.5 0q3.500 3.500 0 7" stroke="#000" stroke-width="1.1" fill="none" /><text x="8" y="14.9" font-size="7.4" font-weight="bold" fill="#000" text-anchor="middle" font-family="Liberation Sans,sans-serif" textLength="9.4" lengthAdjust="spacingAndGlyphs">F7</text></svg>
<svg class="ico" style="left:120px;top:6px" width="16" height="16" viewBox="0 0 16 16"><path d="M0 3.5h3.5M12.5 3.5h3.5M6.5 .5h-2.500v6h2.500M9.5 .5h2.500v6h-2.500" stroke="#000" stroke-width="1" fill="none" shape-rendering="crispEdges"/><text x="8" y="14.9" font-size="7.4" font-weight="bold" fill="#000" text-anchor="middle" font-family="Liberation Sans,sans-serif" textLength="9.4" lengthAdjust="spacingAndGlyphs">F8</text></svg>
<div class="sep" style="left:142px"></div>
<svg class="ico" style="left:148px;top:6px" width="16" height="16" viewBox="0 0 16 16"><path d="M1 3.5h14" stroke="#000" stroke-width="1" fill="none" shape-rendering="crispEdges"/><text x="8" y="14.9" font-size="7.4" font-weight="bold" fill="#000" text-anchor="middle" font-family="Liberation Sans,sans-serif" textLength="9.4" lengthAdjust="spacingAndGlyphs">F9</text></svg>
<svg class="ico" style="left:170px;top:6px" width="16" height="16" viewBox="0 0 16 16"><path d="M8.5 0v7" stroke="#000" stroke-width="1" fill="none" shape-rendering="crispEdges"/><text x="8" y="14.9" font-size="7.4" font-weight="bold" fill="#000" text-anchor="middle" font-family="Liberation Sans,sans-serif" textLength="13.6" lengthAdjust="spacingAndGlyphs">sF9</text></svg>
<svg class="ico" style="left:192px;top:6px" width="16" height="16" viewBox="0 0 16 16"><path d="M1 3.5h14" stroke="#000" stroke-width="1" fill="none" shape-rendering="crispEdges"/><path d="M4.5 0.0L11.5 7.0M11.5 0.0L4.5 7.0" stroke="#f01010" stroke-width="1.5" fill="none" /><text x="8" y="14.9" font-size="7.4" font-weight="bold" fill="#000" text-anchor="middle" font-family="Liberation Sans,sans-serif" textLength="13.6" lengthAdjust="spacingAndGlyphs">cF9</text></svg>
<svg class="ico" style="left:214px;top:6px" width="16" height="16" viewBox="0 0 16 16"><path d="M8.5 0v7.500" stroke="#000" stroke-width="1" fill="none" shape-rendering="crispEdges"/><path d="M5.0 0.0L12.0 7.0M12.0 0.0L5.0 7.0" stroke="#f01010" stroke-width="1.5" fill="none" /><text x="8" y="14.9" font-size="7.4" font-weight="bold" fill="#000" text-anchor="middle" font-family="Liberation Sans,sans-serif" textLength="15.6" lengthAdjust="spacingAndGlyphs">cF10</text></svg>
<div class="sep" style="left:236px"></div>
<svg class="ico" style="left:242px;top:6px" width="16" height="16" viewBox="0 0 16 16"><path d="M0 3.5H3.5M12.5 3.5H16M3.5 0.0V7.0M12.5 0.0V7.0" stroke="#000" stroke-width="1" fill="none" shape-rendering="crispEdges"/><path d="M8 7.0V0.0M5.5 2.5L8 0.0L10.5 2.5" stroke="#000" stroke-width="1" fill="none" /><text x="8" y="14.9" font-size="7.4" font-weight="bold" fill="#000" text-anchor="middle" font-family="Liberation Sans,sans-serif" textLength="13.6" lengthAdjust="spacingAndGlyphs">sF7</text></svg>
<svg class="ico" style="left:264px;top:6px" width="16" height="16" viewBox="0 0 16 16"><path d="M0 3.5H3.5M12.5 3.5H16M3.5 0.0V7.0M12.5 0.0V7.0" stroke="#000" stroke-width="1" fill="none" shape-rendering="crispEdges"/><path d="M8 7.0V0.0M5.5 4.5L8 7.0L10.5 4.5" stroke="#000" stroke-width="1" fill="none" /><text x="8" y="14.9" font-size="7.4" font-weight="bold" fill="#000" text-anchor="middle" font-family="Liberation Sans,sans-serif" textLength="13.6" lengthAdjust="spacingAndGlyphs">sF8</text></svg>
<svg class="ico" style="left:286px;top:6px" width="16" height="16" viewBox="0 0 16 16"><path d="M.5 0.0V3.5H3.5M3.5 0.0V7.0M12.5 0.0V7.0M12.5 3.5H15.5V0.0" stroke="#000" stroke-width="1" fill="none" shape-rendering="crispEdges"/><path d="M8 7.0V0.0M5.5 2.5L8 0.0L10.5 2.5" stroke="#000" stroke-width="1" fill="none" /><text x="8" y="14.9" font-size="7.4" font-weight="bold" fill="#000" text-anchor="middle" font-family="Liberation Sans,sans-serif" textLength="13.6" lengthAdjust="spacingAndGlyphs">aF7</text></svg>
<svg class="ico" style="left:308px;top:6px" width="16" height="16" viewBox="0 0 16 16"><path d="M.5 0.0V3.5H3.5M3.5 0.0V7.0M12.5 0.0V7.0M12.5 3.5H15.5V0.0" stroke="#000" stroke-width="1" fill="none" shape-rendering="crispEdges"/><path d="M8 7.0V0.0M5.5 4.5L8 7.0L10.5 4.5" stroke="#000" stroke-width="1" fill="none" /><text x="8" y="14.9" font-size="7.4" font-weight="bold" fill="#000" text-anchor="middle" font-family="Liberation Sans,sans-serif" textLength="13.6" lengthAdjust="spacingAndGlyphs">aF8</text></svg>
<div class="sep" style="left:330px"></div>
<svg class="ico" style="left:336px;top:6px" width="16" height="16" viewBox="0 0 16 16"><path d="M0 3.5H3.5M12.5 3.5H16M3.5 0.0V7.0M12.5 0.0V7.0" stroke="#000" stroke-width="1" fill="none" shape-rendering="crispEdges"/><path d="M8 7.0V0.0M5.5 2.5L8 0.0L10.5 2.5" stroke="#000" stroke-width="1" fill="none" /><path d="M4.500 6.5l7-6" stroke="#000" stroke-width="1" fill="none" /><text x="8" y="14.9" font-size="7.4" font-weight="bold" fill="#000" text-anchor="middle" font-family="Liberation Sans,sans-serif" textLength="15.6" lengthAdjust="spacingAndGlyphs">saF5</text></svg>
<svg class="ico" style="left:358px;top:6px" width="16" height="16" viewBox="0 0 16 16"><path d="M0 3.5H3.5M12.5 3.5H16M3.5 0.0V7.0M12.5 0.0V7.0" stroke="#000" stroke-width="1" fill="none" shape-rendering="crispEdges"/><path d="M8 7.0V0.0M5.5 4.5L8 7.0L10.5 4.5" stroke="#000" stroke-width="1" fill="none" /><path d="M4.500 6.5l7-6" stroke="#000" stroke-width="1" fill="none" /><text x="8" y="14.9" font-size="7.4" font-weight="bold" fill="#000" text-anchor="middle" font-family="Liberation Sans,sans-serif" textLength="15.6" lengthAdjust="spacingAndGlyphs">saF6</text></svg>
<svg class="ico" style="left:380px;top:6px" width="16" height="16" viewBox="0 0 16 16"><path d="M.5 0.0V3.5H3.5M3.5 0.0V7.0M12.5 0.0V7.0M12.5 3.5H15.5V0.0" stroke="#000" stroke-width="1" fill="none" shape-rendering="crispEdges"/><path d="M8 7.0V0.0M5.5 2.5L8 0.0L10.5 2.5" stroke="#000" stroke-width="1" fill="none" /><path d="M4.500 6.5l7-6" stroke="#000" stroke-width="1" fill="none" /><text x="8" y="14.9" font-size="7.4" font-weight="bold" fill="#000" text-anchor="middle" font-family="Liberation Sans,sans-serif" textLength="15.6" lengthAdjust="spacingAndGlyphs">saF7</text></svg>
<svg class="ico" style="left:402px;top:6px" width="16" height="16" viewBox="0 0 16 16"><path d="M.5 0.0V3.5H3.5M3.5 0.0V7.0M12.5 0.0V7.0M12.5 3.5H15.5V0.0" stroke="#000" stroke-width="1" fill="none" shape-rendering="crispEdges"/><path d="M8 7.0V0.0M5.5 4.5L8 7.0L10.5 4.5" stroke="#000" stroke-width="1" fill="none" /><path d="M4.500 6.5l7-6" stroke="#000" stroke-width="1" fill="none" /><text x="8" y="14.9" font-size="7.4" font-weight="bold" fill="#000" text-anchor="middle" font-family="Liberation Sans,sans-serif" textLength="15.6" lengthAdjust="spacingAndGlyphs">saF8</text></svg>
<div class="sep" style="left:424px"></div>
<svg class="ico" style="left:430px;top:6px" width="16" height="16" viewBox="0 0 16 16"><path d="M8 7.0V0.0M5.5 2.5L8 0.0L10.5 2.5" stroke="#000" stroke-width="1" fill="none" /><text x="8" y="14.9" font-size="7.4" font-weight="bold" fill="#000" text-anchor="middle" font-family="Liberation Sans,sans-serif" textLength="13.6" lengthAdjust="spacingAndGlyphs">aF5</text></svg>
<svg class="ico" style="left:452px;top:6px" width="16" height="16" viewBox="0 0 16 16"><path d="M8 7.0V0.0M5.5 4.5L8 7.0L10.5 4.5" stroke="#000" stroke-width="1" fill="none" /><text x="8" y="14.9" font-size="7.4" font-weight="bold" fill="#000" text-anchor="middle" font-family="Liberation Sans,sans-serif" textLength="15.6" lengthAdjust="spacingAndGlyphs">caF5</text></svg>
<svg class="ico" style="left:474px;top:6px" width="16" height="16" viewBox="0 0 16 16"><path d="M0 3.5h16" stroke="#000" stroke-width="1" fill="none" shape-rendering="crispEdges"/><path d="M4.500 6.5l8-6.500" stroke="#000" stroke-width="1" fill="none" /><text x="8" y="14.9" font-size="7.4" font-weight="bold" fill="#000" text-anchor="middle" font-family="Liberation Sans,sans-serif" textLength="16" lengthAdjust="spacingAndGlyphs">caF10</text></svg>
<svg class="ico" style="left:496px;top:6px" width="16" height="16" viewBox="0 0 16 16"><path d="M2.5 0v5.500h12" stroke="#000" stroke-width="1" fill="none" shape-rendering="crispEdges"/><text x="8" y="14.9" font-size="7.4" font-weight="bold" fill="#000" text-anchor="middle" font-family="Liberation Sans,sans-serif" textLength="13.6" lengthAdjust="spacingAndGlyphs">F10</text></svg>
<svg class="ico" style="left:518px;top:6px" width="16" height="16" viewBox="0 0 16 16"><path d="M1 1.500h3v5h3M10 1.500h5M10 6.500h5" stroke="#000" stroke-width="1" fill="none" stroke-dasharray="2.5 1.2" shape-rendering="crispEdges"/><path d="M4.8 -0.40000000000000036L13.2 8.0M13.2 -0.40000000000000036L4.8 8.0" stroke="#f01010" stroke-width="1.5" fill="none" /><text x="8" y="14.9" font-size="7.4" font-weight="bold" fill="#000" text-anchor="middle" font-family="Liberation Sans,sans-serif" textLength="13.6" lengthAdjust="spacingAndGlyphs">aF9</text></svg>
<div class="sep" style="left:540px"></div>
<svg class="ico" style="left:546px;top:6px" width="16" height="16" viewBox="0 0 16 16"><rect x="3.5" y="2" width="10" height="12" fill="#dcdcea" stroke="#9f9ebd" stroke-width="1.6" /><path d="M.5 5v6M16 5v6M.5 8h3M13.500 8h2.500" stroke="#9f9ebd" stroke-width="1.3" fill="none" /><text x="8.5" y="11.2" font-size="8.5" font-weight="bold" fill="#9f9ebd" text-anchor="middle" font-family="Liberation Sans,sans-serif" textLength="8" lengthAdjust="spacingAndGlyphs">ST</text></svg>
<div class="sep" style="left:568px"></div>
<svg class="ico" style="left:574px;top:6px" width="16" height="16" viewBox="0 0 16 16"><path d="M1 3.5h4M11 3.5h4M5.5 .5v6M10.5 .5v6" stroke="#000" stroke-width="1.3" fill="none" /><path d="M3 8h6q2 0 2 2v2q0 2 -2 2h-3l-2.5 2.5v-2.5h-.5q-2 0 -2 -2v-2q0 -2 2 -2z" stroke="#444" stroke-width="1" fill="#fff" /><path d="M8 11l5 -5l2.5 2.5l-5 5z" stroke="#207010" stroke-width="0.6" fill="#30c020" /><path d="M8 11l2.5 2.5l-3.2 .8z" stroke="none" stroke-width="0" fill="#e8c020" /></svg>
<svg class="ico" style="left:596px;top:6px" width="16" height="16" viewBox="0 0 16 16"><rect x="1" y="2" width="3" height="2" fill="#fff" stroke="#000" stroke-width="1" /><path d="M7 0.5h6q2 0 2 2v2q0 2 -2 2h-3l-2.5 2.5v-2.5h-.5q-2 0 -2 -2v-2q0 -2 2 -2z" stroke="#555" stroke-width="1" fill="#fff" /><path d="M9 5l5 -5l2.5 2.5l-5 5z" stroke="#207010" stroke-width="0.6" fill="#30c020" /><path d="M9 5l2.5 2.5l-3.2 .8z" stroke="none" stroke-width="0" fill="#e8c020" /><path d="M0 13h3M3.5 10.500v5M6 10.500v5M6 13h3M13 13h3" stroke="#000" stroke-width="1.2" fill="none" /><circle cx="11" cy="13" r="2" fill="none" stroke="#000" stroke-width="1.1"/></svg>
<svg class="ico" style="left:618px;top:6px" width="16" height="16" viewBox="0 0 16 16"><path d="M3 0.5h7q2 0 2 2v3q0 2 -2 2h-4l-2.5 2.5v-2.5h-.5q-2 0 -2 -2v-3q0 -2 2 -2z" stroke="#555" stroke-width="1" fill="#fff" /><path d="M8 5.5l5 -5l2.5 2.5l-5 5z" stroke="#207010" stroke-width="0.6" fill="#30c020" /><path d="M8 5.5l2.5 2.5l-3.2 .8z" stroke="none" stroke-width="0" fill="#e8c020" /><path d="M0 13h3.500M12.5 13h3.500" stroke="#000" stroke-width="1.2" fill="none" /><path d="M6.5 10.500q-2.500 2.500 0 5M9.5 10.500q2.500 2.500 0 5" stroke="#000" stroke-width="1.2" fill="none" /></svg>
<div class="sep" style="left:640px"></div>
<svg class="ico" style="left:646px;top:6px" width="16" height="16" viewBox="0 0 16 16"><rect x="1" y="2" width="3" height="2" fill="#fff" stroke="#000" stroke-width="1" /><path d="M7 0.5h6q2 0 2 2v2q0 2 -2 2h-3l-2.5 2.5v-2.5h-.5q-2 0 -2 -2v-2q0 -2 2 -2z" stroke="#555" stroke-width="1" fill="#fff" /><path d="M9 6l5 -5l2.5 2.5l-5 5z" stroke="#207010" stroke-width="0.6" fill="#30c020" /><path d="M9 6l2.5 2.5l-3.2 .8z" stroke="none" stroke-width="0" fill="#e8c020" /><path d="M0 13h3M3.5 10.500v5M6 10.500v5" stroke="#000" stroke-width="1.2" fill="none" /><rect x="7.5" y="9.5" width="8.5" height="6" fill="#fff" stroke="#2030a0" stroke-width="1" /><path d="M7.5 12.5h8.500" stroke="#2030a0" stroke-width="1" fill="none" /><rect x="7.5" y="9" width="8.5" height="1.5" fill="#10a090" /></svg>
<div class="sep" style="left:668px"></div>
<svg class="ico" style="left:674px;top:6px" width="16" height="16" viewBox="0 0 16 16"><rect x="1" y="2" width="3" height="2" fill="#fff" stroke="#000" stroke-width="1" /><path d="M7 0.5h6q2 0 2 2v2q0 2 -2 2h-3l-2.5 2.5v-2.5h-.5q-2 0 -2 -2v-2q0 -2 2 -2z" stroke="#555" stroke-width="1" fill="#fff" /><rect x="7" y="2" width="6" height="1" fill="#777" /><rect x="7" y="4" width="6" height="1" fill="#777" /><path d="M0 13h3M3.5 10.500v5M6 10.500v5" stroke="#000" stroke-width="1.2" fill="none" /><rect x="7.5" y="10" width="8.5" height="5.5" fill="#fff" stroke="#2030a0" stroke-width="1" /><path d="M7.5 12.5h8.500" stroke="#2030a0" stroke-width="1" fill="none" /><rect x="7.5" y="9.5" width="8.5" height="1.5" fill="#10a090" /></svg>
<div class="sep" style="left:696px"></div>
<svg class="ico" style="left:702px;top:6px" width="16" height="16" viewBox="0 0 16 16"><path d="M1.5 1.5h8.5l3.5 3.5v9.0h-12.0z" stroke="#9f9ebd" stroke-width="1" fill="#e6e6f0" /><path d="M10.0 1.5v3.5h3.5" stroke="#9f9ebd" stroke-width="1" fill="none" /><path d="M3 4.500h7M3 6.500h8M3 8.500h8M3 10.500h8M3 12.500h6" stroke="#9f9ebd" stroke-width="1.1" fill="none" /><rect x="12.5" y="6" width="3" height="7" fill="#d0cfe0" stroke="#9f9ebd" stroke-width="0.8" /></svg>
<svg class="ico" style="left:724px;top:6px" width="16" height="16" viewBox="0 0 16 16"><path d="M5.5 0.5h6.5l3.5 3.5v5.5h-10.0z" stroke="#9f9ebd" stroke-width="1" fill="#e6e6f0" /><path d="M12.0 0.5v3.5h3.5" stroke="#9f9ebd" stroke-width="1" fill="none" /><path d="M7 3.500h5M7 5.500h6" stroke="#9f9ebd" stroke-width="1" fill="none" /><path d="M0 9.500l4.500-4.500v9z" stroke="none" stroke-width="0" fill="#9f9ebd" /><circle cx="9.5" cy="10" r="3.3" fill="#f0f0f8" stroke="#9f9ebd" stroke-width="1.4"/><path d="M12 12.500l3 3" stroke="#9f9ebd" stroke-width="1.8" fill="none" /></svg>
<svg class="ico" style="left:746px;top:6px" width="16" height="16" viewBox="0 0 16 16"><path d="M5.5 0.5h6.5l3.5 3.5v5.5h-10.0z" stroke="#9f9ebd" stroke-width="1" fill="#e6e6f0" /><path d="M12.0 0.5v3.5h3.5" stroke="#9f9ebd" stroke-width="1" fill="none" /><path d="M7 3.500h5M7 5.500h6" stroke="#9f9ebd" stroke-width="1" fill="none" /><path d="M.5 5l4.500 4.500l-4.500 4.500z" stroke="none" stroke-width="0" fill="#9f9ebd" /><circle cx="10" cy="10" r="3.3" fill="#f0f0f8" stroke="#9f9ebd" stroke-width="1.4"/><path d="M12.500 12.500l3 3" stroke="#9f9ebd" stroke-width="1.8" fill="none" /></svg>
<div class="sep" style="left:768px"></div>
<svg class="ico" style="left:774px;top:6px" width="16" height="16" viewBox="0 0 16 16"><path d="M0 3.500h2.500M4.500 3.500h4M0 9.500h2.500M4.500 9.500h2.500v4.500h2M2.500 1.500v4M4.500 1.500v4M2.500 7.500v4M4.500 7.500v4" stroke="#1414f4" stroke-width="1" fill="none" shape-rendering="crispEdges"/><path d="M9.500 3.500h6.500M9.500 9.500h6.500M9.500 14.500h6.500" stroke="#1414f4" stroke-width="1.2" fill="none" stroke-dasharray="2 1.2"/><path d="M10.500 2v3M10.500 8v3M10.500 13v3M13.500 2v3M13.500 8v3M13.500 13v3" stroke="#1414f4" stroke-width="0.9" fill="none" /></svg>
<div class="hot" style="left:793px"></div>
<svg class="ico" style="left:796px;top:6px" width="16" height="16" viewBox="0 0 16 16"><path d="M0 3.500h2.500M4.500 3.500h4M0 9.500h2.500M4.500 9.500h2.500v4.500h2M2.500 1.500v4M4.500 1.500v4M2.500 7.500v4M4.500 7.500v4" stroke="#1414f4" stroke-width="1" fill="none" shape-rendering="crispEdges"/><path d="M9.500 3.500h6.500M9.500 9.500h6.500M9.500 14.500h6.500" stroke="#1414f4" stroke-width="1.2" fill="none" stroke-dasharray="2 1.2"/><path d="M10.500 2v3M10.500 8v3M10.500 13v3M13.500 2v3M13.500 8v3M13.500 13v3" stroke="#1414f4" stroke-width="0.9" fill="none" /><path d="M7.500 7.500l6.500-5.500" stroke="#f01010" stroke-width="2.8" fill="none" /><path d="M5.500 9.500l2.600 0l-1.600-2.200z" stroke="none" stroke-width="0" fill="#f4e000" /><path d="M5.500 9.500l1.200-.1" stroke="#000" stroke-width="1" fill="none" /></svg>
<svg class="ico" style="left:818px;top:6px" width="16" height="16" viewBox="0 0 16 16"><path d="M5.0 2.0h4l3.5 3.5v5.5h-7.5z" stroke="#444" stroke-width="1" fill="#fff" /><path d="M9.0 2.0v3.5h3.5" stroke="#444" stroke-width="1" fill="none" /><path d="M6 4h5M6 6h5M6 8h5" stroke="#444" stroke-width="1" fill="none" /><circle cx="9" cy="6.5" r="5.3" fill="none" stroke="#1424f0" stroke-width="1.3"/><path d="M12.800 10.500l3.200 4.500" stroke="#1424f0" stroke-width="1.5" fill="none" /><rect x="0" y="10" width="7" height="5.5" fill="#5c0808" stroke="#200" stroke-width="0.6" /><rect x="2" y="11.3" width="4" height="3" fill="#fff" /><rect x="0" y="10" width="2" height="5.5" fill="#c01818" /></svg>
<svg class="ico" style="left:840px;top:6px" width="16" height="16" viewBox="0 0 16 16"><path d="M5.0 2.0h4l3.5 3.5v5.5h-7.5z" stroke="#444" stroke-width="1" fill="#fff" /><path d="M9.0 2.0v3.5h3.5" stroke="#444" stroke-width="1" fill="none" /><path d="M6 4h3M6 6h3" stroke="#666" stroke-width="1" fill="none" /><circle cx="9" cy="6.5" r="5.3" fill="none" stroke="#1424f0" stroke-width="1.3"/><path d="M12.800 10.500l3.200 4.500" stroke="#1424f0" stroke-width="1.5" fill="none" /><rect x="0" y="10" width="7" height="5.5" fill="#5c0808" stroke="#200" stroke-width="0.6" /><rect x="2" y="11.3" width="4" height="3" fill="#fff" /><rect x="0" y="10" width="2" height="5.5" fill="#c01818" /><path d="M9.500 6.500l5.500-5" stroke="#f01010" stroke-width="2.8" fill="none" /><path d="M7.500 8.500l2.600 0l-1.600-2.200z" stroke="none" stroke-width="0" fill="#f4e000" /></svg>
<svg class="ico" style="left:862px;top:6px" width="16" height="16" viewBox="0 0 16 16"><rect x="0" y="0" width="14" height="8" fill="#b9b8d2" /><text x="7" y="7" font-size="7.5" font-weight="bold" fill="#f0f0f8" text-anchor="middle" font-family="Liberation Sans,sans-serif" textLength="11.5" lengthAdjust="spacingAndGlyphs">Dev</text><circle cx="9.5" cy="10" r="3.3" fill="#f0f0f8" stroke="#9f9ebd" stroke-width="1.4"/><path d="M12 12.500l3 3" stroke="#9f9ebd" stroke-width="1.8" fill="none" /></svg>
<svg class="ico" style="left:884px;top:6px" width="16" height="16" viewBox="0 0 16 16"><circle cx="7" cy="7" r="6" fill="#fff" stroke="#0c0c6c" stroke-width="2"/><path d="M3 5.500h5M5.500 3v5" stroke="#000" stroke-width="1.8" fill="none" /><path d="M6 9.500h5.500" stroke="#000" stroke-width="1.8" fill="none" /><path d="M11.500 11.500l4 4" stroke="#a01818" stroke-width="2.2" fill="none" /></svg>
<div class="tbh"><div class="tbhm"></div></div>
</div>
<div id="nav">
<div class="cap" style="left:0;top:0;width:274px;height:27px"><div class="grip" style="left:1px;top:4px;height:18px"></div><span class="captxt" style="left:10px;top:5px">Navigation</span>
<svg class="abs" style="left:241px;top:6px" width="28" height="14" viewBox="0 0 28 14"><path d="M3.500 1.500h4v5h-4zM2 7h7M5.500 7v4" fill="none" stroke="#000" stroke-width="1.300"/><rect x="6" y="2" width="1.500" height="5" fill="#000"/><path d="M18.500 2.500l7 7M25.500 2.500l-7 7" stroke="#000" stroke-width="1.700"/></svg></div>
<div id="projband"><span>Project</span></div>
<div id="minitb">
<svg class="abs" style="left:2px;top:4px" width="16" height="16" viewBox="0 0 16 16"><path d="M0.5 3.5h6l3.5 3.5v7.5h-9.5z" stroke="#444" stroke-width="1" fill="#fff" /><path d="M6.5 3.5v3.5h3.5" stroke="#444" stroke-width="1" fill="none" /><path d="M11.500 0v7M8 3.500h7" stroke="#f07010" stroke-width="2.4" fill="none" /></svg>
<svg class="abs" style="left:24px;top:7px" width="16" height="16" viewBox="0 0 16 16"><path d="M0.5 0.5h4l3.5 3.5v5.5h-7.5z" stroke="#b9b8d0" stroke-width="1" fill="#e6e6f0" /><path d="M4.5 0.5v3.5h3.5" stroke="#b9b8d0" stroke-width="1" fill="none" /><path d="M5.5 4.5h5l3.5 3.5v6.5h-8.5z" stroke="#b9b8d0" stroke-width="1" fill="#e6e6f0" /><path d="M10.5 4.5v3.5h3.5" stroke="#b9b8d0" stroke-width="1" fill="none" /><rect x="7" y="8" width="5" height="1" fill="#b9b8d0" /><rect x="7" y="10" width="5" height="1" fill="#b9b8d0" /><rect x="7" y="12" width="5" height="1" fill="#b9b8d0" /></svg>
<svg class="abs" style="left:46px;top:6px" width="16" height="16" viewBox="0 0 16 16"><rect x="1" y="2" width="11" height="12" fill="#d8d7e6" stroke="#b9b8d0" stroke-width="1" /><rect x="4" y="0.5" width="5" height="3" fill="#c8c7da" stroke="#b9b8d0" stroke-width="0.8" /><path d="M6.5 6.5h5l3.5 3.5v5.5h-8.5z" stroke="#b9b8d0" stroke-width="1" fill="#e8e8f2" /><path d="M11.5 6.5v3.5h3.5" stroke="#b9b8d0" stroke-width="1" fill="none" /></svg>
<svg class="abs" style="left:69px;top:5px" width="16" height="16" viewBox="0 0 16 16"><path d="M0.5 0.5h5l3.5 3.5v6.5h-8.5z" stroke="#555" stroke-width="1" fill="#fff" /><path d="M5.5 0.5v3.5h3.5" stroke="#555" stroke-width="1" fill="none" /><rect x="2" y="3" width="4" height="1" fill="#888" /><rect x="2" y="5" width="4" height="1" fill="#888" /><rect x="2" y="7" width="4" height="1" fill="#888" /><circle cx="10.5" cy="11.5" r="4.7" fill="#1668e0" stroke="#0a3fa0" stroke-width="0.8"/><text x="10.5" y="15" font-size="8" font-weight="bold" fill="#fff" text-anchor="middle" font-family="Liberation Sans,sans-serif" font-family="Liberation Serif,serif">i</text></svg>
<svg class="abs" style="left:92px;top:5px" width="16" height="16" viewBox="0 0 16 16"><path d="M0.5 0.5h8l3.5 3.5v10.5h-11.5z" stroke="#3a5fb0" stroke-width="1" fill="#fff" /><path d="M8.5 0.5v3.5h3.5" stroke="#3a5fb0" stroke-width="1" fill="none" /><path d="M3 8q0-3.500 4-3.500l0-1.500l3 2.500l-3 2.500v-1.500q-2 0-2 1.500z" stroke="none" stroke-width="0" fill="#18a028" /><path d="M9.500 8q0 3.500-4 3.500l0 1.500l-3-2.500l3-2.500v1.500q2 0 2-1.500z" stroke="none" stroke-width="0" fill="#18a028" /></svg>
<div class="sep" style="left:112px;top:6px"></div>
<svg class="abs" style="left:119px;top:4px" width="16" height="18" viewBox="0 0 16 18"><path d="M0 11l6-3v-7l7 3v7z" stroke="#333" stroke-width="0.6" fill="#8a8a8a" /><rect x="5" y="7" width="3" height="9" fill="#e83020" /><rect x="8.5" y="5" width="5" height="11" fill="#444" /><rect x="9.5" y="7" width="3" height="1" fill="#9c9" /><rect x="9.5" y="9.5" width="3" height="1" fill="#ccc" /><rect x="9.5" y="12" width="3" height="1" fill="#ccc" /></svg>
<div class="darr" style="left:136px;top:12px"></div>
</div>
<div id="tree">
<div class="vd" style="left:5px;top:0px;height:669px"></div>
<div class="vd" style="left:24px;top:16px;height:194px"></div>
<div class="vd" style="left:24px;top:276px;height:396px"></div>
<div class="vd" style="left:43px;top:296px;height:354px"></div>
<div class="hd" style="left:10px;top:10px;width:5px"></div>
<div class="xb" style="left:1px;top:6px"><i class="h"></i></div>
<svg class="abs" style="left:16px;top:2px" width="16" height="16" viewBox="0 0 16 16"><path d="M1 15.500q-.5 0-.5-.5v-8.500q0-2 2-2h2.500l1.500 1.500h7q2 0 2 2v6.500q0 1-1 1z" stroke="#b8820c" stroke-width="1" fill="#f4c43c" /><path d="M1.500 14.500v-5q0-1 1-1h11q1 0 1 1v5z" stroke="none" stroke-width="0" fill="#fdeea0" /><path d="M1 16h14" stroke="#9a9a9a" stroke-width="0.6" fill="none" /><rect x="4" y="0" width="5.5" height="11.5" fill="#8a8a8a" /><rect x="4" y="0" width="5.5" height="2" fill="#111" /><rect x="8.5" y="2" width="5.5" height="12" fill="#6c6c6c" /><rect x="8.5" y="2" width="5.5" height="2" fill="#111" /><rect x="12" y="3.5" width="1.5" height="2.5" fill="#f01010" /><rect x="6" y="7" width="2" height="2" fill="#ddd" /><rect x="10" y="9" width="2" height="2" fill="#e4e4e4" /></svg>
<span class="tl" style="left:37.5px;top:2px;letter-spacing:0.29px">Intelligent Function Module</span>
<div class="hd" style="left:29px;top:30px;width:5px"></div>
<div class="xb" style="left:20px;top:26px"><i class="h"></i><i class="v"></i></div>
<svg class="abs" style="left:35px;top:22px" width="16" height="16" viewBox="0 0 16 16"><path d="M1 15.500q-.5 0-.5-.5v-8.500q0-2 2-2h2.500l1.500 1.500h7q2 0 2 2v6.500q0 1-1 1z" stroke="#b8820c" stroke-width="1" fill="#f4c43c" /><path d="M1.500 14.500v-5q0-1 1-1h11q1 0 1 1v5z" stroke="none" stroke-width="0" fill="#fdeea0" /><path d="M1 16h14" stroke="#9a9a9a" stroke-width="0.6" fill="none" /><rect x="6.5" y="2" width="5.5" height="11.5" fill="#5c5c5c" /><rect x="6.5" y="2" width="5.5" height="2" fill="#111" /><rect x="10" y="3.5" width="1.5" height="2" fill="#f01010" /><rect x="8" y="8" width="2" height="1.6" fill="#d8d8d8" /></svg>
<span class="tl" style="left:56.1px;top:22px;letter-spacing:-0.14px">00A0:QJ71C24N-R2</span>
<div class="hd" style="left:29px;top:50px;width:5px"></div>
<div class="xb" style="left:20px;top:46px"><i class="h"></i><i class="v"></i></div>
<svg class="abs" style="left:35px;top:42px" width="16" height="16" viewBox="0 0 16 16"><path d="M1 15.500q-.5 0-.5-.5v-8.500q0-2 2-2h2.500l1.500 1.500h7q2 0 2 2v6.500q0 1-1 1z" stroke="#b8820c" stroke-width="1" fill="#f4c43c" /><path d="M1.500 14.500v-5q0-1 1-1h11q1 0 1 1v5z" stroke="none" stroke-width="0" fill="#fdeea0" /><path d="M1 16h14" stroke="#9a9a9a" stroke-width="0.6" fill="none" /><rect x="6.5" y="2" width="5.5" height="11.5" fill="#5c5c5c" /><rect x="6.5" y="2" width="5.5" height="2" fill="#111" /><rect x="10" y="3.5" width="1.5" height="2" fill="#f01010" /><rect x="8" y="8" width="2" height="1.6" fill="#d8d8d8" /></svg>
<span class="tl" style="left:56.1px;top:42px;letter-spacing:-0.18px">00C0:QJ71C24N-R2</span>
<div class="hd" style="left:29px;top:70px;width:5px"></div>
<div class="xb" style="left:20px;top:66px"><i class="h"></i><i class="v"></i></div>
<svg class="abs" style="left:35px;top:62px" width="16" height="16" viewBox="0 0 16 16"><path d="M1 15.500q-.5 0-.5-.5v-8.500q0-2 2-2h2.500l1.500 1.500h7q2 0 2 2v6.500q0 1-1 1z" stroke="#b8820c" stroke-width="1" fill="#f4c43c" /><path d="M1.500 14.500v-5q0-1 1-1h11q1 0 1 1v5z" stroke="none" stroke-width="0" fill="#fdeea0" /><path d="M1 16h14" stroke="#9a9a9a" stroke-width="0.6" fill="none" /><rect x="6.5" y="2" width="5.5" height="11.5" fill="#5c5c5c" /><rect x="6.5" y="2" width="5.5" height="2" fill="#111" /><rect x="10" y="3.5" width="1.5" height="2" fill="#f01010" /><rect x="8" y="8" width="2" height="1.6" fill="#d8d8d8" /></svg>
<span class="tl" style="left:56.1px;top:62px;letter-spacing:-0.25px">00E0:QJ71C24N</span>
<div class="hd" style="left:29px;top:90px;width:5px"></div>
<div class="xb" style="left:20px;top:86px"><i class="h"></i><i class="v"></i></div>
<svg class="abs" style="left:35px;top:82px" width="16" height="16" viewBox="0 0 16 16"><path d="M1 15.500q-.5 0-.5-.5v-8.500q0-2 2-2h2.500l1.500 1.500h7q2 0 2 2v6.500q0 1-1 1z" stroke="#b8820c" stroke-width="1" fill="#f4c43c" /><path d="M1.500 14.500v-5q0-1 1-1h11q1 0 1 1v5z" stroke="none" stroke-width="0" fill="#fdeea0" /><path d="M1 16h14" stroke="#9a9a9a" stroke-width="0.6" fill="none" /><rect x="6.5" y="2" width="5.5" height="11.5" fill="#5c5c5c" /><rect x="6.5" y="2" width="5.5" height="2" fill="#111" /><rect x="10" y="3.5" width="1.5" height="2" fill="#f01010" /><rect x="8" y="8" width="2" height="1.6" fill="#d8d8d8" /></svg>
<span class="tl" style="left:56.1px;top:82px;letter-spacing:0.02px">0100:QD77MS16</span>
<div class="hd" style="left:29px;top:110px;width:5px"></div>
<div class="xb" style="left:20px;top:106px"><i class="h"></i><i class="v"></i></div>
<svg class="abs" style="left:35px;top:102px" width="16" height="16" viewBox="0 0 16 16"><path d="M1 15.500q-.5 0-.5-.5v-8.500q0-2 2-2h2.500l1.500 1.500h7q2 0 2 2v6.500q0 1-1 1z" stroke="#b8820c" stroke-width="1" fill="#f4c43c" /><path d="M1.500 14.500v-5q0-1 1-1h11q1 0 1 1v5z" stroke="none" stroke-width="0" fill="#fdeea0" /><path d="M1 16h14" stroke="#9a9a9a" stroke-width="0.6" fill="none" /><rect x="6.5" y="2" width="5.5" height="11.5" fill="#5c5c5c" /><rect x="6.5" y="2" width="5.5" height="2" fill="#111" /><rect x="10" y="3.5" width="1.5" height="2" fill="#f01010" /><rect x="8" y="8" width="2" height="1.6" fill="#d8d8d8" /></svg>
<span class="tl" style="left:56.1px;top:102px;letter-spacing:0.02px">0120:QD77MS16</span>
<div class="hd" style="left:29px;top:130px;width:5px"></div>
<div class="xb" style="left:20px;top:126px"><i class="h"></i><i class="v"></i></div>
<svg class="abs" style="left:35px;top:122px" width="16" height="16" viewBox="0 0 16 16"><path d="M1 15.500q-.5 0-.5-.5v-8.500q0-2 2-2h2.500l1.500 1.500h7q2 0 2 2v6.500q0 1-1 1z" stroke="#b8820c" stroke-width="1" fill="#f4c43c" /><path d="M1.500 14.500v-5q0-1 1-1h11q1 0 1 1v5z" stroke="none" stroke-width="0" fill="#fdeea0" /><path d="M1 16h14" stroke="#9a9a9a" stroke-width="0.6" fill="none" /><rect x="6.5" y="2" width="5.5" height="11.5" fill="#5c5c5c" /><rect x="6.5" y="2" width="5.5" height="2" fill="#111" /><rect x="10" y="3.5" width="1.5" height="2" fill="#f01010" /><rect x="8" y="8" width="2" height="1.6" fill="#d8d8d8" /></svg>
<span class="tl" style="left:56.1px;top:122px;letter-spacing:0.03px">0140:QD75D4N</span>
<div class="hd" style="left:29px;top:150px;width:5px"></div>
<div class="xb" style="left:20px;top:146px"><i class="h"></i><i class="v"></i></div>
<svg class="abs" style="left:35px;top:142px" width="16" height="16" viewBox="0 0 16 16"><path d="M1 15.500q-.5 0-.5-.5v-8.500q0-2 2-2h2.500l1.500 1.500h7q2 0 2 2v6.500q0 1-1 1z" stroke="#b8820c" stroke-width="1" fill="#f4c43c" /><path d="M1.500 14.500v-5q0-1 1-1h11q1 0 1 1v5z" stroke="none" stroke-width="0" fill="#fdeea0" /><path d="M1 16h14" stroke="#9a9a9a" stroke-width="0.6" fill="none" /><rect x="6.5" y="2" width="5.5" height="11.5" fill="#5c5c5c" /><rect x="6.5" y="2" width="5.5" height="2" fill="#111" /><rect x="10" y="3.5" width="1.5" height="2" fill="#f01010" /><rect x="8" y="8" width="2" height="1.6" fill="#d8d8d8" /></svg>
<span class="tl" style="left:56.1px;top:142px;letter-spacing:-0.12px">0180:Q64RD</span>
<div class="hd" style="left:29px;top:170px;width:5px"></div>
<div class="xb" style="left:20px;top:166px"><i class="h"></i><i class="v"></i></div>
<svg class="abs" style="left:35px;top:162px" width="16" height="16" viewBox="0 0 16 16"><path d="M1 15.500q-.5 0-.5-.5v-8.500q0-2 2-2h2.500l1.500 1.500h7q2 0 2 2v6.500q0 1-1 1z" stroke="#b8820c" stroke-width="1" fill="#f4c43c" /><path d="M1.500 14.500v-5q0-1 1-1h11q1 0 1 1v5z" stroke="none" stroke-width="0" fill="#fdeea0" /><path d="M1 16h14" stroke="#9a9a9a" stroke-width="0.6" fill="none" /><rect x="6.5" y="2" width="5.5" height="11.5" fill="#5c5c5c" /><rect x="6.5" y="2" width="5.5" height="2" fill="#111" /><rect x="10" y="3.5" width="1.5" height="2" fill="#f01010" /><rect x="8" y="8" width="2" height="1.6" fill="#d8d8d8" /></svg>
<span class="tl" style="left:56.1px;top:162px;letter-spacing:-0.12px">01A0:Q64AD</span>
<div class="hd" style="left:29px;top:190px;width:5px"></div>
<div class="xb" style="left:20px;top:186px"><i class="h"></i><i class="v"></i></div>
<svg class="abs" style="left:35px;top:182px" width="16" height="16" viewBox="0 0 16 16"><path d="M1 15.500q-.5 0-.5-.5v-8.500q0-2 2-2h2.500l1.500 1.500h7q2 0 2 2v6.500q0 1-1 1z" stroke="#b8820c" stroke-width="1" fill="#f4c43c" /><path d="M1.500 14.500v-5q0-1 1-1h11q1 0 1 1v5z" stroke="none" stroke-width="0" fill="#fdeea0" /><path d="M1 16h14" stroke="#9a9a9a" stroke-width="0.6" fill="none" /><rect x="6.5" y="2" width="5.5" height="11.5" fill="#5c5c5c" /><rect x="6.5" y="2" width="5.5" height="2" fill="#111" /><rect x="10" y="3.5" width="1.5" height="2" fill="#f01010" /><rect x="8" y="8" width="2" height="1.6" fill="#d8d8d8" /></svg>
<span class="tl" style="left:56.1px;top:182px;letter-spacing:-0.14px">01C0:Q68ADI</span>
<div class="hd" style="left:29px;top:210px;width:5px"></div>
<div class="xb" style="left:20px;top:206px"><i class="h"></i><i class="v"></i></div>
<svg class="abs" style="left:35px;top:202px" width="16" height="16" viewBox="0 0 16 16"><path d="M1 15.500q-.5 0-.5-.5v-8.500q0-2 2-2h2.500l1.500 1.500h7q2 0 2 2v6.500q0 1-1 1z" stroke="#b8820c" stroke-width="1" fill="#f4c43c" /><path d="M1.500 14.500v-5q0-1 1-1h11q1 0 1 1v5z" stroke="none" stroke-width="0" fill="#fdeea0" /><path d="M1 16h14" stroke="#9a9a9a" stroke-width="0.6" fill="none" /><rect x="6.5" y="2" width="5.5" height="11.5" fill="#5c5c5c" /><rect x="6.5" y="2" width="5.5" height="2" fill="#111" /><rect x="10" y="3.5" width="1.5" height="2" fill="#f01010" /><rect x="8" y="8" width="2" height="1.6" fill="#d8d8d8" /></svg>
<span class="tl" style="left:56.1px;top:202px;letter-spacing:-0.18px">01E0:Q68ADI</span>
<div class="hd" style="left:6px;top:230px;width:10px"></div>
<svg class="abs" style="left:16px;top:222px" width="16" height="16" viewBox="0 0 16 16"><circle cx="6" cy="6" r="5.8" fill="#2f7fe0" stroke="#1c5cb0" stroke-width="0.6"/><path d="M2.500 3q2.500-3 6-1.500q1 2-1.500 3q-2 .5-2.500 2.500q-2-1-2-4z" stroke="none" stroke-width="0" fill="#2fb02f" /><circle cx="4.5" cy="3.5" r="1.5" fill="#9fe09f"/><path d="M5.0 4.5h4l3.5 3.5v7.0h-7.5z" stroke="#5c6c9c" stroke-width="1" fill="#f4f6fc" /><path d="M9.0 4.5v3.5h3.5" stroke="#5c6c9c" stroke-width="1" fill="none" /><path d="M6 7.500h3M6 9.500h3M6 11.500h3" stroke="#8c9cbc" stroke-width="0.9" fill="none" /><path d="M9.500 12.500l5-6l1.800 1.500l-5 6z" stroke="#1c5c10" stroke-width="0.5" fill="#3cb830" /><path d="M9.500 12.500l1.800 1.500l-2.300 .8z" stroke="none" stroke-width="0" fill="#e8c8a0" /><path d="M14.500 6.500l.8-.9l1.800 1.500l-.8 .9z" stroke="none" stroke-width="0" fill="#e08080" /></svg>
<span class="tl" style="left:37.5px;top:222px;letter-spacing:0.20px">Global Device Comment</span>
<div class="hd" style="left:10px;top:250px;width:5px"></div>
<div class="xb" style="left:1px;top:246px"><i class="h"></i><i class="v"></i></div>
<svg class="abs" style="left:16px;top:242px" width="16" height="16" viewBox="0 0 16 16"><path d="M.5 15v-11h4l1.500 1.500h5v9.500z" stroke="#b8820c" stroke-width="1" fill="#f4c43c" /><path d="M1.500 14.500v-5h13.500v5z" stroke="none" stroke-width="0" fill="#fdeea0" /><rect x="5.5" y="0.5" width="9.5" height="7.5" fill="#9ceef8" stroke="#4c4c4c" stroke-width="1" /><path d="M6 8.500h10v3.500h-10z" stroke="none" stroke-width="0" fill="#2c2c2c" /><rect x="7" y="12" width="9" height="1.5" fill="#6c6c6c" /><path d="M.8 4l5.500 6l1.800-1.500l-5.500-6z" stroke="#1c5c10" stroke-width="0.5" fill="#3cb830" /><path d="M6.300 10l1.800-1.500l.6 2.300z" stroke="none" stroke-width="0" fill="#e8c8a0" /><path d="M.5 15.500h15" stroke="#a07010" stroke-width="1" fill="none" /></svg>
<span class="tl" style="left:37.5px;top:242px;letter-spacing:0.23px">Program Setting</span>
<div class="hd" style="left:10px;top:270px;width:5px"></div>
<div class="xb" style="left:1px;top:266px"><i class="h"></i></div>
<svg class="abs" style="left:16px;top:262px" width="16" height="16" viewBox="0 0 16 16"><path d="M.5 15.500v-11.500h3.500l1 1.500h4.500v-5h6v15z" stroke="#f4a818" stroke-width="1" fill="#ffe880" /><circle cx="5" cy="3.5" r="2.8" fill="#f48cb4"/><circle cx="5" cy="3.5" r="1.2" fill="#fcd0e0"/><circle cx="10.5" cy="4" r="2.8" fill="#5cc45c"/><circle cx="12.5" cy="6.5" r="2" fill="#8cd88c"/><rect x="1.5" y="7" width="5" height="1.5" fill="#6cb4f0" /><circle cx="4" cy="10.5" r="2.5" fill="#d8dca0"/><circle cx="9.5" cy="10" r="2.5" fill="#fcf0b0"/></svg>
<span class="tl" style="left:37.5px;top:262px;letter-spacing:-0.76px">POU</span>
<div class="hd" style="left:29px;top:290px;width:5px"></div>
<div class="xb" style="left:20px;top:286px"><i class="h"></i></div>
<svg class="abs" style="left:35px;top:282px" width="16" height="16" viewBox="0 0 16 16"><path d="M.5 15v-8q0-2 2-2h1" stroke="#b8820c" stroke-width="1" fill="#f4c43c" /><path d="M3.0 0.5h5l3.5 3.5v7.5h-8.5z" stroke="#7c8cac" stroke-width="1" fill="#dfe6f4" /><path d="M8.0 0.5v3.5h3.5" stroke="#7c8cac" stroke-width="1" fill="none" /><path d="M5.0 1.5h5l3.5 3.5v7.5h-8.5z" stroke="#7c8cac" stroke-width="1" fill="#eef2fa" /><path d="M10.0 1.5v3.5h3.5" stroke="#7c8cac" stroke-width="1" fill="none" /><path d="M7.0 3.0h4.5l3.5 3.5v6.5h-8.0z" stroke="#8c9cbc" stroke-width="1" fill="#fafbfe" /><path d="M11.5 3.0v3.5h3.5" stroke="#8c9cbc" stroke-width="1" fill="none" /><path d="M.5 15.500v-7h15v6q0 1-1 1z" stroke="#b8820c" stroke-width="1" fill="#fbe9a0" /><rect x="4" y="10" width="8" height="1.2" fill="#ead58c" /><rect x="4" y="12.3" width="8" height="1" fill="#ead58c" /></svg>
<span class="tl" style="left:56.1px;top:282px;letter-spacing:0.37px">Program</span>
<div class="hd" style="left:48px;top:310px;width:5px"></div>
<div class="xb" style="left:39px;top:306px"><i class="h"></i><i class="v"></i></div>
<svg class="abs" style="left:54px;top:302px" width="16" height="16" viewBox="0 0 16 16"><path d="M1 15.500q-.5 0-.5-.5v-8.500q0-2 2-2h2.500l1.500 1.500h7q2 0 2 2v6.500q0 1-1 1z" stroke="#b8820c" stroke-width="1" fill="#f4c43c" /><path d="M1.500 14.500v-5q0-1 1-1h11q1 0 1 1v5z" stroke="none" stroke-width="0" fill="#fdeea0" /><path d="M1 16h14" stroke="#9a9a9a" stroke-width="0.6" fill="none" /><path d="M5.500 14.500h9.500v-10" stroke="#8a8a9a" stroke-width="1" fill="none" /><path d="M4.5 0.5h6.5l3.5 3.5v9.5h-10.0z" stroke="#6c7c9c" stroke-width="1" fill="#fff" /><path d="M11.0 0.5v3.5h3.5" stroke="#6c7c9c" stroke-width="1" fill="none" /><rect x="5" y="7" width="3" height="1.4" fill="#e81010" /><rect x="10" y="7" width="3" height="1.4" fill="#e81010" /><rect x="7" y="4" width="1.5" height="7.5" fill="#e81010" /><rect x="9.5" y="4" width="1.5" height="7.5" fill="#e81010" /></svg>
<span class="tl" style="left:74.9px;top:302px;letter-spacing:0.41px">01 MAIN</span>
<div class="hd" style="left:48px;top:330px;width:5px"></div>
<div class="xb" style="left:39px;top:326px"><i class="h"></i><i class="v"></i></div>
<svg class="abs" style="left:54px;top:322px" width="16" height="16" viewBox="0 0 16 16"><path d="M1 15.500q-.5 0-.5-.5v-8.500q0-2 2-2h2.500l1.500 1.500h7q2 0 2 2v6.500q0 1-1 1z" stroke="#b8820c" stroke-width="1" fill="#f4c43c" /><path d="M1.500 14.500v-5q0-1 1-1h11q1 0 1 1v5z" stroke="none" stroke-width="0" fill="#fdeea0" /><path d="M1 16h14" stroke="#9a9a9a" stroke-width="0.6" fill="none" /><path d="M5.500 14.500h9.500v-10" stroke="#8a8a9a" stroke-width="1" fill="none" /><path d="M4.5 0.5h6.5l3.5 3.5v9.5h-10.0z" stroke="#6c7c9c" stroke-width="1" fill="#fff" /><path d="M11.0 0.5v3.5h3.5" stroke="#6c7c9c" stroke-width="1" fill="none" /><rect x="5" y="7" width="3" height="1.4" fill="#e81010" /><rect x="10" y="7" width="3" height="1.4" fill="#e81010" /><rect x="7" y="4" width="1.5" height="7.5" fill="#e81010" /><rect x="9.5" y="4" width="1.5" height="7.5" fill="#e81010" /></svg>
<span class="tl" style="left:74.9px;top:322px;letter-spacing:-0.09px">02 ALARM</span>
<div class="hd" style="left:48px;top:350px;width:5px"></div>
<div class="xb" style="left:39px;top:346px"><i class="h"></i><i class="v"></i></div>
<svg class="abs" style="left:54px;top:342px" width="16" height="16" viewBox="0 0 16 16"><path d="M1 15.500q-.5 0-.5-.5v-8.500q0-2 2-2h2.500l1.500 1.500h7q2 0 2 2v6.500q0 1-1 1z" stroke="#b8820c" stroke-width="1" fill="#f4c43c" /><path d="M1.500 14.500v-5q0-1 1-1h11q1 0 1 1v5z" stroke="none" stroke-width="0" fill="#fdeea0" /><path d="M1 16h14" stroke="#9a9a9a" stroke-width="0.6" fill="none" /><path d="M5.500 14.500h9.500v-10" stroke="#8a8a9a" stroke-width="1" fill="none" /><path d="M4.5 0.5h6.5l3.5 3.5v9.5h-10.0z" stroke="#6c7c9c" stroke-width="1" fill="#fff" /><path d="M11.0 0.5v3.5h3.5" stroke="#6c7c9c" stroke-width="1" fill="none" /><rect x="5" y="7" width="3" height="1.4" fill="#e81010" /><rect x="10" y="7" width="3" height="1.4" fill="#e81010" /><rect x="7" y="4" width="1.5" height="7.5" fill="#e81010" /><rect x="9.5" y="4" width="1.5" height="7.5" fill="#e81010" /></svg>
<span class="tl" style="left:74.9px;top:342px;letter-spacing:0.14px">03 MANUAL</span>
<div class="hd" style="left:48px;top:370px;width:5px"></div>
<div class="xb" style="left:39px;top:366px"><i class="h"></i><i class="v"></i></div>
<svg class="abs" style="left:54px;top:362px" width="16" height="16" viewBox="0 0 16 16"><path d="M1 15.500q-.5 0-.5-.5v-8.500q0-2 2-2h2.500l1.500 1.500h7q2 0 2 2v6.500q0 1-1 1z" stroke="#b8820c" stroke-width="1" fill="#f4c43c" /><path d="M1.500 14.500v-5q0-1 1-1h11q1 0 1 1v5z" stroke="none" stroke-width="0" fill="#fdeea0" /><path d="M1 16h14" stroke="#9a9a9a" stroke-width="0.6" fill="none" /><path d="M5.500 14.500h9.500v-10" stroke="#8a8a9a" stroke-width="1" fill="none" /><path d="M4.5 0.5h6.5l3.5 3.5v9.5h-10.0z" stroke="#6c7c9c" stroke-width="1" fill="#fff" /><path d="M11.0 0.5v3.5h3.5" stroke="#6c7c9c" stroke-width="1" fill="none" /><rect x="5" y="7" width="3" height="1.4" fill="#e81010" /><rect x="10" y="7" width="3" height="1.4" fill="#e81010" /><rect x="7" y="4" width="1.5" height="7.5" fill="#e81010" /><rect x="9.5" y="4" width="1.5" height="7.5" fill="#e81010" /></svg>
<span class="tl" style="left:74.9px;top:362px;letter-spacing:-0.07px">04 SEMI AUTO</span>
<div class="hd" style="left:48px;top:390px;width:5px"></div>
<div class="xb" style="left:39px;top:386px"><i class="h"></i><i class="v"></i></div>
<svg class="abs" style="left:54px;top:382px" width="16" height="16" viewBox="0 0 16 16"><path d="M1 15.500q-.5 0-.5-.5v-8.500q0-2 2-2h2.500l1.500 1.500h7q2 0 2 2v6.500q0 1-1 1z" stroke="#b8820c" stroke-width="1" fill="#f4c43c" /><path d="M1.500 14.500v-5q0-1 1-1h11q1 0 1 1v5z" stroke="none" stroke-width="0" fill="#fdeea0" /><path d="M1 16h14" stroke="#9a9a9a" stroke-width="0.6" fill="none" /><path d="M5.500 14.500h9.500v-10" stroke="#8a8a9a" stroke-width="1" fill="none" /><path d="M4.5 0.5h6.5l3.5 3.5v9.5h-10.0z" stroke="#6c7c9c" stroke-width="1" fill="#fff" /><path d="M11.0 0.5v3.5h3.5" stroke="#6c7c9c" stroke-width="1" fill="none" /><rect x="5" y="7" width="3" height="1.4" fill="#e81010" /><rect x="10" y="7" width="3" height="1.4" fill="#e81010" /><rect x="7" y="4" width="1.5" height="7.5" fill="#e81010" /><rect x="9.5" y="4" width="1.5" height="7.5" fill="#e81010" /></svg>
<span class="tl" style="left:74.9px;top:382px;letter-spacing:-0.09px">08 AUTO</span>
<div class="hd" style="left:48px;top:410px;width:5px"></div>
<div class="xb" style="left:39px;top:406px"><i class="h"></i><i class="v"></i></div>
<svg class="abs" style="left:54px;top:402px" width="16" height="16" viewBox="0 0 16 16"><path d="M1 15.500q-.5 0-.5-.5v-8.500q0-2 2-2h2.500l1.500 1.500h7q2 0 2 2v6.500q0 1-1 1z" stroke="#b8820c" stroke-width="1" fill="#f4c43c" /><path d="M1.500 14.500v-5q0-1 1-1h11q1 0 1 1v5z" stroke="none" stroke-width="0" fill="#fdeea0" /><path d="M1 16h14" stroke="#9a9a9a" stroke-width="0.6" fill="none" /><path d="M5.500 14.500h9.500v-10" stroke="#8a8a9a" stroke-width="1" fill="none" /><path d="M4.5 0.5h6.5l3.5 3.5v9.5h-10.0z" stroke="#6c7c9c" stroke-width="1" fill="#fff" /><path d="M11.0 0.5v3.5h3.5" stroke="#6c7c9c" stroke-width="1" fill="none" /><rect x="5" y="7" width="3" height="1.4" fill="#e81010" /><rect x="10" y="7" width="3" height="1.4" fill="#e81010" /><rect x="7" y="4" width="1.5" height="7.5" fill="#e81010" /><rect x="9.5" y="4" width="1.5" height="7.5" fill="#e81010" /></svg>
<span class="tl" style="left:74.9px;top:402px;letter-spacing:-0.30px">10 TM INTERFACE</span>
<div class="hd" style="left:48px;top:430px;width:5px"></div>
<div class="xb" style="left:39px;top:426px"><i class="h"></i><i class="v"></i></div>
<svg class="abs" style="left:54px;top:422px" width="16" height="16" viewBox="0 0 16 16"><path d="M1 15.500q-.5 0-.5-.5v-8.500q0-2 2-2h2.500l1.500 1.500h7q2 0 2 2v6.500q0 1-1 1z" stroke="#b8820c" stroke-width="1" fill="#f4c43c" /><path d="M1.500 14.500v-5q0-1 1-1h11q1 0 1 1v5z" stroke="none" stroke-width="0" fill="#fdeea0" /><path d="M1 16h14" stroke="#9a9a9a" stroke-width="0.6" fill="none" /><path d="M5.500 14.500h9.500v-10" stroke="#8a8a9a" stroke-width="1" fill="none" /><path d="M4.5 0.5h6.5l3.5 3.5v9.5h-10.0z" stroke="#6c7c9c" stroke-width="1" fill="#fff" /><path d="M11.0 0.5v3.5h3.5" stroke="#6c7c9c" stroke-width="1" fill="none" /><rect x="5" y="7" width="3" height="1.4" fill="#e81010" /><rect x="10" y="7" width="3" height="1.4" fill="#e81010" /><rect x="7" y="4" width="1.5" height="7.5" fill="#e81010" /><rect x="9.5" y="4" width="1.5" height="7.5" fill="#e81010" /></svg>
<span class="tl" style="left:74.9px;top:422px;letter-spacing:-0.59px">11 RECIPE</span>
<div class="hd" style="left:48px;top:450px;width:5px"></div>
<div class="xb" style="left:39px;top:446px"><i class="h"></i><i class="v"></i></div>
<svg class="abs" style="left:54px;top:442px" width="16" height="16" viewBox="0 0 16 16"><path d="M1 15.500q-.5 0-.5-.5v-8.500q0-2 2-2h2.500l1.500 1.500h7q2 0 2 2v6.500q0 1-1 1z" stroke="#b8820c" stroke-width="1" fill="#f4c43c" /><path d="M1.500 14.500v-5q0-1 1-1h11q1 0 1 1v5z" stroke="none" stroke-width="0" fill="#fdeea0" /><path d="M1 16h14" stroke="#9a9a9a" stroke-width="0.6" fill="none" /><path d="M5.500 14.500h9.500v-10" stroke="#8a8a9a" stroke-width="1" fill="none" /><path d="M4.5 0.5h6.5l3.5 3.5v9.5h-10.0z" stroke="#6c7c9c" stroke-width="1" fill="#fff" /><path d="M11.0 0.5v3.5h3.5" stroke="#6c7c9c" stroke-width="1" fill="none" /><rect x="5" y="7" width="3" height="1.4" fill="#e81010" /><rect x="10" y="7" width="3" height="1.4" fill="#e81010" /><rect x="7" y="4" width="1.5" height="7.5" fill="#e81010" /><rect x="9.5" y="4" width="1.5" height="7.5" fill="#e81010" /></svg>
<span class="tl" style="left:74.9px;top:442px;letter-spacing:-0.29px">12 PLC 통신</span>
<div class="hd" style="left:48px;top:470px;width:5px"></div>
<div class="xb" style="left:39px;top:466px"><i class="h"></i><i class="v"></i></div>
<svg class="abs" style="left:54px;top:462px" width="16" height="16" viewBox="0 0 16 16"><path d="M1 15.500q-.5 0-.5-.5v-8.500q0-2 2-2h2.500l1.500 1.500h7q2 0 2 2v6.500q0 1-1 1z" stroke="#b8820c" stroke-width="1" fill="#f4c43c" /><path d="M1.500 14.500v-5q0-1 1-1h11q1 0 1 1v5z" stroke="none" stroke-width="0" fill="#fdeea0" /><path d="M1 16h14" stroke="#9a9a9a" stroke-width="0.6" fill="none" /><path d="M5.500 14.500h9.500v-10" stroke="#8a8a9a" stroke-width="1" fill="none" /><path d="M4.5 0.5h6.5l3.5 3.5v9.5h-10.0z" stroke="#6c7c9c" stroke-width="1" fill="#fff" /><path d="M11.0 0.5v3.5h3.5" stroke="#6c7c9c" stroke-width="1" fill="none" /><rect x="5" y="7" width="3" height="1.4" fill="#e81010" /><rect x="10" y="7" width="3" height="1.4" fill="#e81010" /><rect x="7" y="4" width="1.5" height="7.5" fill="#e81010" /><rect x="9.5" y="4" width="1.5" height="7.5" fill="#e81010" /></svg>
<span class="tl" style="left:74.9px;top:462px;letter-spacing:0.24px">13 CIM</span>
<div class="hd" style="left:48px;top:490px;width:5px"></div>
<div class="xb" style="left:39px;top:486px"><i class="h"></i><i class="v"></i></div>
<svg class="abs" style="left:54px;top:482px" width="16" height="16" viewBox="0 0 16 16"><path d="M1 15.500q-.5 0-.5-.5v-8.500q0-2 2-2h2.500l1.500 1.500h7q2 0 2 2v6.500q0 1-1 1z" stroke="#b8820c" stroke-width="1" fill="#f4c43c" /><path d="M1.500 14.500v-5q0-1 1-1h11q1 0 1 1v5z" stroke="none" stroke-width="0" fill="#fdeea0" /><path d="M1 16h14" stroke="#9a9a9a" stroke-width="0.6" fill="none" /><path d="M5.500 14.500h9.500v-10" stroke="#8a8a9a" stroke-width="1" fill="none" /><path d="M4.5 0.5h6.5l3.5 3.5v9.5h-10.0z" stroke="#6c7c9c" stroke-width="1" fill="#fff" /><path d="M11.0 0.5v3.5h3.5" stroke="#6c7c9c" stroke-width="1" fill="none" /><rect x="5" y="7" width="3" height="1.4" fill="#e81010" /><rect x="10" y="7" width="3" height="1.4" fill="#e81010" /><rect x="7" y="4" width="1.5" height="7.5" fill="#e81010" /><rect x="9.5" y="4" width="1.5" height="7.5" fill="#e81010" /></svg>
<span class="tl" style="left:74.9px;top:482px;letter-spacing:-0.11px">15 TOUCH</span>
<div class="hd" style="left:48px;top:510px;width:5px"></div>
<div class="xb" style="left:39px;top:506px"><i class="h"></i><i class="v"></i></div>
<svg class="abs" style="left:54px;top:502px" width="16" height="16" viewBox="0 0 16 16"><path d="M1 15.500q-.5 0-.5-.5v-8.500q0-2 2-2h2.500l1.500 1.500h7q2 0 2 2v6.500q0 1-1 1z" stroke="#b8820c" stroke-width="1" fill="#f4c43c" /><path d="M1.500 14.500v-5q0-1 1-1h11q1 0 1 1v5z" stroke="none" stroke-width="0" fill="#fdeea0" /><path d="M1 16h14" stroke="#9a9a9a" stroke-width="0.6" fill="none" /><path d="M5.500 14.500h9.500v-10" stroke="#8a8a9a" stroke-width="1" fill="none" /><path d="M4.5 0.5h6.5l3.5 3.5v9.5h-10.0z" stroke="#6c7c9c" stroke-width="1" fill="#fff" /><path d="M11.0 0.5v3.5h3.5" stroke="#6c7c9c" stroke-width="1" fill="none" /><rect x="5" y="7" width="3" height="1.4" fill="#e81010" /><rect x="10" y="7" width="3" height="1.4" fill="#e81010" /><rect x="7" y="4" width="1.5" height="7.5" fill="#e81010" /><rect x="9.5" y="4" width="1.5" height="7.5" fill="#e81010" /></svg>
<span class="tl" style="left:74.9px;top:502px;letter-spacing:-0.26px">16 OUTPUT</span>
<div class="hd" style="left:48px;top:530px;width:5px"></div>
<div class="xb" style="left:39px;top:526px"><i class="h"></i><i class="v"></i></div>
<svg class="abs" style="left:54px;top:522px" width="16" height="16" viewBox="0 0 16 16"><path d="M1 15.500q-.5 0-.5-.5v-8.500q0-2 2-2h2.500l1.500 1.500h7q2 0 2 2v6.500q0 1-1 1z" stroke="#b8820c" stroke-width="1" fill="#f4c43c" /><path d="M1.500 14.500v-5q0-1 1-1h11q1 0 1 1v5z" stroke="none" stroke-width="0" fill="#fdeea0" /><path d="M1 16h14" stroke="#9a9a9a" stroke-width="0.6" fill="none" /><path d="M5.500 14.500h9.500v-10" stroke="#8a8a9a" stroke-width="1" fill="none" /><path d="M4.5 0.5h6.5l3.5 3.5v9.5h-10.0z" stroke="#6c7c9c" stroke-width="1" fill="#fff" /><path d="M11.0 0.5v3.5h3.5" stroke="#6c7c9c" stroke-width="1" fill="none" /><rect x="5" y="7" width="3" height="1.4" fill="#e81010" /><rect x="10" y="7" width="3" height="1.4" fill="#e81010" /><rect x="7" y="4" width="1.5" height="7.5" fill="#e81010" /><rect x="9.5" y="4" width="1.5" height="7.5" fill="#e81010" /></svg>
<span class="tl" style="left:74.9px;top:522px;letter-spacing:-0.02px">21 SERIAL COMMUNICATION</span>
<div class="hd" style="left:48px;top:550px;width:5px"></div>
<div class="xb" style="left:39px;top:546px"><i class="h"></i><i class="v"></i></div>
<svg class="abs" style="left:54px;top:542px" width="16" height="16" viewBox="0 0 16 16"><path d="M1 15.500q-.5 0-.5-.5v-8.500q0-2 2-2h2.500l1.500 1.500h7q2 0 2 2v6.500q0 1-1 1z" stroke="#b8820c" stroke-width="1" fill="#f4c43c" /><path d="M1.500 14.500v-5q0-1 1-1h11q1 0 1 1v5z" stroke="none" stroke-width="0" fill="#fdeea0" /><path d="M1 16h14" stroke="#9a9a9a" stroke-width="0.6" fill="none" /><path d="M5.500 14.500h9.500v-10" stroke="#8a8a9a" stroke-width="1" fill="none" /><path d="M4.5 0.5h6.5l3.5 3.5v9.5h-10.0z" stroke="#6c7c9c" stroke-width="1" fill="#fff" /><path d="M11.0 0.5v3.5h3.5" stroke="#6c7c9c" stroke-width="1" fill="none" /><rect x="5" y="7" width="3" height="1.4" fill="#e81010" /><rect x="10" y="7" width="3" height="1.4" fill="#e81010" /><rect x="7" y="4" width="1.5" height="7.5" fill="#e81010" /><rect x="9.5" y="4" width="1.5" height="7.5" fill="#e81010" /></svg>
<span class="tl" style="left:74.9px;top:542px;letter-spacing:-0.21px">22 RTD &amp; AD_CARD</span>
<div class="hd" style="left:48px;top:570px;width:5px"></div>
<div class="xb" style="left:39px;top:566px"><i class="h"></i><i class="v"></i></div>
<svg class="abs" style="left:54px;top:562px" width="16" height="16" viewBox="0 0 16 16"><path d="M1 15.500q-.5 0-.5-.5v-8.500q0-2 2-2h2.500l1.500 1.500h7q2 0 2 2v6.500q0 1-1 1z" stroke="#b8820c" stroke-width="1" fill="#f4c43c" /><path d="M1.500 14.500v-5q0-1 1-1h11q1 0 1 1v5z" stroke="none" stroke-width="0" fill="#fdeea0" /><path d="M1 16h14" stroke="#9a9a9a" stroke-width="0.6" fill="none" /><path d="M5.500 14.500h9.500v-10" stroke="#8a8a9a" stroke-width="1" fill="none" /><path d="M4.5 0.5h6.5l3.5 3.5v9.5h-10.0z" stroke="#6c7c9c" stroke-width="1" fill="#fff" /><path d="M11.0 0.5v3.5h3.5" stroke="#6c7c9c" stroke-width="1" fill="none" /><rect x="5" y="7" width="3" height="1.4" fill="#e81010" /><rect x="10" y="7" width="3" height="1.4" fill="#e81010" /><rect x="7" y="4" width="1.5" height="7.5" fill="#e81010" /><rect x="9.5" y="4" width="1.5" height="7.5" fill="#e81010" /></svg>
<span class="tl" style="left:74.9px;top:562px;letter-spacing:-0.11px">30 QD77MS16_1</span>
<div class="hd" style="left:48px;top:590px;width:5px"></div>
<div class="xb" style="left:39px;top:586px"><i class="h"></i><i class="v"></i></div>
<svg class="abs" style="left:54px;top:582px" width="16" height="16" viewBox="0 0 16 16"><path d="M1 15.500q-.5 0-.5-.5v-8.500q0-2 2-2h2.500l1.500 1.500h7q2 0 2 2v6.500q0 1-1 1z" stroke="#b8820c" stroke-width="1" fill="#f4c43c" /><path d="M1.500 14.500v-5q0-1 1-1h11q1 0 1 1v5z" stroke="none" stroke-width="0" fill="#fdeea0" /><path d="M1 16h14" stroke="#9a9a9a" stroke-width="0.6" fill="none" /><path d="M5.500 14.500h9.500v-10" stroke="#8a8a9a" stroke-width="1" fill="none" /><path d="M4.5 0.5h6.5l3.5 3.5v9.5h-10.0z" stroke="#6c7c9c" stroke-width="1" fill="#fff" /><path d="M11.0 0.5v3.5h3.5" stroke="#6c7c9c" stroke-width="1" fill="none" /><rect x="5" y="7" width="3" height="1.4" fill="#e81010" /><rect x="10" y="7" width="3" height="1.4" fill="#e81010" /><rect x="7" y="4" width="1.5" height="7.5" fill="#e81010" /><rect x="9.5" y="4" width="1.5" height="7.5" fill="#e81010" /></svg>
<span class="tl" style="left:74.9px;top:582px;letter-spacing:-0.05px">31 QD77MS16_2</span>
<div class="hd" style="left:48px;top:610px;width:5px"></div>
<div class="xb" style="left:39px;top:606px"><i class="h"></i><i class="v"></i></div>
<svg class="abs" style="left:54px;top:602px" width="16" height="16" viewBox="0 0 16 16"><path d="M1 15.500q-.5 0-.5-.5v-8.500q0-2 2-2h2.500l1.500 1.500h7q2 0 2 2v6.500q0 1-1 1z" stroke="#b8820c" stroke-width="1" fill="#f4c43c" /><path d="M1.500 14.500v-5q0-1 1-1h11q1 0 1 1v5z" stroke="none" stroke-width="0" fill="#fdeea0" /><path d="M1 16h14" stroke="#9a9a9a" stroke-width="0.6" fill="none" /><path d="M5.500 14.500h9.500v-10" stroke="#8a8a9a" stroke-width="1" fill="none" /><path d="M4.5 0.5h6.5l3.5 3.5v9.5h-10.0z" stroke="#6c7c9c" stroke-width="1" fill="#fff" /><path d="M11.0 0.5v3.5h3.5" stroke="#6c7c9c" stroke-width="1" fill="none" /><rect x="5" y="7" width="3" height="1.4" fill="#e81010" /><rect x="10" y="7" width="3" height="1.4" fill="#e81010" /><rect x="7" y="4" width="1.5" height="7.5" fill="#e81010" /><rect x="9.5" y="4" width="1.5" height="7.5" fill="#e81010" /></svg>
<span class="tl" style="left:74.9px;top:602px;letter-spacing:0.13px">32 QD75D4</span>
<div class="hd" style="left:44px;top:630px;width:9px"></div>
<svg class="abs" style="left:54px;top:622px" width="16" height="16" viewBox="0 0 16 16"><path d="M3.5 1.5h6.5l3.5 3.5v9.5h-10.0z" stroke="#6c7c9c" stroke-width="1" fill="#fff" /><path d="M10.0 1.5v3.5h3.5" stroke="#6c7c9c" stroke-width="1" fill="none" /><rect x="4" y="8" width="3" height="1.4" fill="#e81010" /><rect x="9" y="8" width="3" height="1.4" fill="#e81010" /><rect x="6" y="5" width="1.5" height="7.5" fill="#e81010" /><rect x="8.5" y="5" width="1.5" height="7.5" fill="#e81010" /></svg>
<span class="tl" style="left:74.9px;top:622px;letter-spacing:-0.22px">33 UMAC_WT-Y</span>
<div class="hd" style="left:48px;top:650px;width:5px"></div>
<div class="xb" style="left:39px;top:646px"><i class="h"></i><i class="v"></i></div>
<svg class="abs" style="left:54px;top:642px" width="16" height="16" viewBox="0 0 16 16"><path d="M1 15.500q-.5 0-.5-.5v-8.500q0-2 2-2h2.500l1.500 1.500h7q2 0 2 2v6.500q0 1-1 1z" stroke="#b8820c" stroke-width="1" fill="#f4c43c" /><path d="M1.500 14.500v-5q0-1 1-1h11q1 0 1 1v5z" stroke="none" stroke-width="0" fill="#fdeea0" /><path d="M1 16h14" stroke="#9a9a9a" stroke-width="0.6" fill="none" /><path d="M5.500 14.500h9.500v-10" stroke="#8a8a9a" stroke-width="1" fill="none" /><path d="M4.5 0.5h6.5l3.5 3.5v9.5h-10.0z" stroke="#6c7c9c" stroke-width="1" fill="#fff" /><path d="M11.0 0.5v3.5h3.5" stroke="#6c7c9c" stroke-width="1" fill="none" /><rect x="5" y="7" width="3" height="1.4" fill="#e81010" /><rect x="10" y="7" width="3" height="1.4" fill="#e81010" /><rect x="7" y="4" width="1.5" height="7.5" fill="#e81010" /><rect x="9.5" y="4" width="1.5" height="7.5" fill="#e81010" /></svg>
<span class="tl" style="left:74.9px;top:642px;letter-spacing:-0.46px">40 PURIFIER</span>
<div class="hd" style="left:25px;top:670px;width:9px"></div>
<svg class="abs" style="left:35px;top:662px" width="16" height="16" viewBox="0 0 16 16"><path d="M3.5 3.5h5l3.5 3.5v6.5h-8.5z" stroke="#5a6a90" stroke-width="1" fill="#e8ecf8" /><path d="M8.5 3.5v3.5h3.5" stroke="#5a6a90" stroke-width="1" fill="none" /><path d="M6.0 5.0h5l3.5 3.5v6.5h-8.5z" stroke="#5a6a90" stroke-width="1" fill="#f4f6fc" /><path d="M11.0 5.0v3.5h3.5" stroke="#5a6a90" stroke-width="1" fill="none" /></svg>
<span class="tl" style="left:56.1px;top:662px;letter-spacing:0.03px">Local Device Comment</span>
</div>
<div id="tsb"><div class="thumb" style="left:0;top:34px;width:17px;height:566px"></div>
<svg class="abs" style="left:3px;top:5px" width="11" height="8" viewBox="0 0 11 8"><path d="M1.500 6.500l4-4l4 4" fill="none" stroke="#606060" stroke-width="2"/></svg>
<svg class="abs" style="left:3px;top:656px" width="11" height="8" viewBox="0 0 11 8"><path d="M1.500 1.500l4 4l4-4" fill="none" stroke="#606060" stroke-width="2"/></svg></div>
<div id="split"><div class="sgrip"></div></div>
<div class="obtn sel" style="top:753px"><svg class="abs" style="left:1px;top:3px" width="26" height="26" viewBox="0 0 26 26"><path d="M4 4.500l11-3v13l-11 2.500z" stroke="#2a2a2a" stroke-width="0.6" fill="#4c4c4c" /><path d="M5.500 6l8-2v9.500l-8 2z" stroke="none" stroke-width="0" fill="#8c8c8c" /><path d="M1 17.500l9-2.500l3 1l-9 3z" stroke="#444" stroke-width="0.5" fill="#7c7c7c" /><rect x="10" y="11" width="5" height="14" fill="#e23a18" /><rect x="10" y="10" width="5" height="2.5" fill="#f4684a" /><rect x="15" y="9" width="10" height="16" fill="#2c2c2c" /><rect x="17" y="11.5" width="1.5" height="4" fill="#6c6" /><rect x="20.5" y="11.5" width="3" height="3" fill="#eee" /><rect x="20.5" y="16" width="3" height="3" fill="#e4e4e4" /><rect x="20.5" y="20.5" width="3" height="3" fill="#bbb" /><rect x="16.5" y="17" width="3" height="1" fill="#888" /><rect x="16.5" y="19.5" width="3" height="1" fill="#888" /><rect x="16.5" y="22" width="3" height="1" fill="#888" /></svg><span>Project</span></div>
<div class="obtn" style="top:785px"><svg class="abs" style="left:1px;top:3px" width="26" height="26" viewBox="0 0 26 26"><path d="M1 3q5-2 10.500 .5v15q-5.500-2.500-10.500-.5z" stroke="#7a6a50" stroke-width="0.9" fill="#f3ead8" /><path d="M11.500 3.500q5.500-2.500 10.500-.5v15q-5-2-10.500 .5z" stroke="#7a6a50" stroke-width="0.9" fill="#f8f1e4" /><path d="M3 6.500q3-1 6.500 0M3 9q3-1 6.500 0M3 11.500q3-1 6.500 0M3 14q3-1 6.500 0M13.500 6.500q3-1 6.500 0M13.500 9q3-1 4 -.5" stroke="#cfc0a0" stroke-width="0.8" fill="none" /><path d="M10.500 18.500v2.500h2v-2.500" stroke="#5a4a30" stroke-width="0.8" fill="#8a7a60" /><path d="M15 9.500q1.500-1 2.500 .5l3 5h3.500q1.500 0 1.500 1.500v5.500h-8v-4z" stroke="#a8841a" stroke-width="0.7" fill="#f2c53a" /><rect x="16.5" y="22" width="8.5" height="3" fill="#5cb85c" /></svg><span style="letter-spacing:-.2px">User Library</span></div>
<div class="obtn" style="top:817px"><svg class="abs" style="left:1px;top:3px" width="26" height="26" viewBox="0 0 26 26"><path d="M2.500 6.500h-1.500v17h13" stroke="#18a030" stroke-width="1.8" fill="none" /><path d="M5 4l13-3v12l-13 2.500z" stroke="#123" stroke-width="0.7" fill="#14b4f0" /><path d="M6.500 5.500l10-2.300v4l-10 2.300z" stroke="none" stroke-width="0" fill="#7cdcfc" /><path d="M3 17l13-2.500l3 1.500l-13 3z" stroke="#333" stroke-width="0.5" fill="#6c6c6c" /><rect x="14" y="8" width="11" height="17" fill="#303030" stroke="#111" stroke-width="0.6" /><rect x="16" y="10" width="4" height="6" fill="#555" /><rect x="21.5" y="10" width="2" height="2" fill="#8c8" /><rect x="21.5" y="13.5" width="2" height="2" fill="#ccc" /><rect x="16" y="19" width="7" height="1.2" fill="#999" /><rect x="16" y="21.5" width="7" height="1.2" fill="#999" /></svg><span>Connection Destination</span></div>
<div class="obtn last" style="top:849px"><svg class="abs" style="left:258px;top:9px" width="9" height="16" viewBox="0 0 9 16"><path d="M1 1l2.500 2.500l-2.500 2.500M4.500 1l2.500 2.500l-2.500 2.500" fill="none" stroke="#000" stroke-width="1.500"/><path d="M1.500 10h6l-3 3z" fill="#000"/></svg></div>
<div class="abs" style="left:273px;top:746px;width:1px;height:136px;background:#8584a8"></div><div class="abs" style="left:0;top:881px;width:274px;height:1px;background:#8584a8"></div>
</div>
<div id="tabstrip"></div>
<svg class="abs" style="left:278px;top:85px;z-index:3" width="250" height="27" viewBox="0 0 250 27"><defs><linearGradient id="tg" x1="0" y1="0" x2="0" y2="1"><stop offset="0" stop-color="#fffdf8"/><stop offset=".45" stop-color="#fde6c0"/><stop offset="1" stop-color="#fbb95e"/></linearGradient></defs><path d="M2.500 26.500L4.500 24.500L26 3.500Q27.500 2.500 30 2.500H238.500Q242.500 2.500 242.500 6.500V26.500z" fill="url(#tg)" stroke="#4a6cb0" stroke-width="1"/><rect x="2" y="24" width="240.500" height="2" fill="#fcbc66"/><rect x="0" y="24" width="1" height="3" fill="#3d62a8"/><rect x="1" y="25" width="1.500" height="2" fill="#fdbe70"/></svg>
<svg class="abs" style="left:311px;top:92px;z-index:4" width="13" height="15" viewBox="0 0 13 15"><path d="M.5 .5h8l4 4v10h-12z" fill="#fff" stroke="#667"/><path d="M8.500 .5v4h4" fill="#dde" stroke="#667"/><path d="M2 8.500h2.500M8 8.500h2.500" stroke="#e01010" stroke-width="1.400"/><path d="M5 5.500v6M7.500 5.500v6" stroke="#e01010" stroke-width="1.500"/></svg>
<span class="tabtxt">[PRG]Write 01 MAIN 148...</span>
<div class="tabx"><svg width="13" height="13" viewBox="0 0 13 13"><path d="M3 3l7 7M10 3l-7 7" stroke="#8c8672" stroke-width="2"/></svg></div>
<svg class="abs" style="left:1866px;top:90px" width="48" height="14" viewBox="0 0 48 14"><path d="M9.500 2.500l-4.500 4.500l4.500 4.500z" fill="#fff" stroke="#000" stroke-width="1"/><path d="M21.500 2.500l4.500 4.500l-4.500 4.500z" fill="#fff" stroke="#000" stroke-width="1"/><path d="M36 7.500h9l-4.500 4.500z" fill="#000"/></svg>
<div id="frame"><div id="view">
<span class="cm" style="left:16px;top:5px"><i class="nr">[Title]</i><b class="k">장비</b>&nbsp; MODE<b class="k"> 변경</b></span>
<span class="dv" style="left:121.0px;top:28px">M10000</span>
<span class="cm" style="left:86.5px;top:70px">Power On</span>
<span class="dv" style="left:200.5px;top:28px">L3120</span>
<span class="cm" style="left:166.5px;top:70px">Auto<b class="k">모드</b></span>
<span class="cm" style="left:166.5px;top:90px"><b class="k">변경 가능</b></span>
<span class="dv" style="left:280.0px;top:28px">L3030</span>
<span class="cm" style="left:245.5px;top:70px"><b class="k">오토모드</b></span>
<span class="cm" style="left:245.5px;top:90px"><b class="k">진행</b>BIT</span>
<span class="dv" style="left:359.5px;top:28px">L3104</span>
<span class="cm" style="left:325.5px;top:70px">Stop On</span>
<span class="dv" style="left:439.0px;top:28px">L1150</span>
<span class="cm" style="left:404.5px;top:70px">HEAVY</span>
<span class="cm" style="left:404.5px;top:90px">ALARM</span>
<span class="cm" style="left:404.5px;top:110px">INTELOCK</span>
<span class="dv" style="left:359.5px;top:174px">SM400</span>
<span class="cm" style="left:325.5px;top:216px"><b class="k">상시</b> ON</span>
<span class="dv" style="left:121.0px;top:321px">L3100</span>
<span class="cm" style="left:86.5px;top:363px">Auto</span>
<span class="cm" style="left:86.5px;top:383px">Mode On</span>
<span class="dv" style="left:200.5px;top:321px">L3101</span>
<span class="cm" style="left:166.5px;top:363px">SEMIAUTO</span>
<span class="cm" style="left:166.5px;top:383px">Mode On</span>
<span class="dv" style="left:280.0px;top:321px">L3102</span>
<span class="cm" style="left:245.5px;top:363px">Manual</span>
<span class="cm" style="left:245.5px;top:383px">Mode On</span>
<span class="dl" style="left:1124px;top:48px">L3100</span>
<span class="cm" style="left:1119.5px;top:70px">Auto</span>
<span class="cm" style="left:1119.5px;top:90px">Mode On</span>
<span class="sn" style="left:48px;top:48px">39</span>
<span class="sn" style="left:48px;top:488px">65</span>
<span class="sn" style="left:48px;top:635px">69</span>
<span class="dv" style="left:121.0px;top:468px">L3100</span>
<span class="cm" style="left:86.5px;top:510px">Auto</span>
<span class="cm" style="left:86.5px;top:530px">Mode On</span>
<span class="dn" style="left:965px;top:490px">MOV</span>
<span class="dn" style="left:1037px;top:490px">K0</span>
<span class="dn" style="left:1122.5px;top:490px">D40</span>
<span class="cm" style="left:1127.5px;top:510px"><b class="k">장비</b></span>
<span class="cm" style="left:1127.5px;top:530px">Mode <b class="k">표시</b></span>
<span class="dv" style="left:121.0px;top:615px">SM400</span>
<span class="cm" style="left:86.5px;top:657px"><b class="k">상시</b> ON</span>
<span class="dv" style="left:200.5px;top:615px">L4000</span>
<span class="cm" style="left:166.5px;top:657px">ALL AXIS</span>
<span class="cm" style="left:166.5px;top:677px"><b class="k">준비 상태</b></span>
<span class="dv" style="left:280.0px;top:615px">L1150</span>
<span class="cm" style="left:245.5px;top:657px">HEAVY</span>
<span class="cm" style="left:245.5px;top:677px">ALARM</span>
<span class="cm" style="left:245.5px;top:697px">INTELOCK</span>
<span class="dv" style="left:359.5px;top:615px">L3108</span>
<span class="cm" style="left:325.5px;top:657px">PM Mode</span>
<span class="dv" style="left:439.0px;top:615px">L1200</span>
<span class="cm" style="left:404.5px;top:657px">SEMIAUTO</span>
<span class="cm" style="left:404.5px;top:677px"><b class="k">동작진행</b></span>
<span class="cm" style="left:404.5px;top:697px"><b class="k">중 상태</b></span>
<span class="dv" style="left:518.5px;top:615px">L1500</span>
<span class="cm" style="left:484.5px;top:657px">SACC</span>
<span class="cm" style="left:484.5px;top:677px">Probe<b class="k">이동</b></span>
<span class="cm" style="left:484.5px;top:697px"><b class="k">동작</b></span>
<span class="cm" style="left:484.5px;top:717px"><b class="k">진행중</b></span>
<span class="dv" style="left:597.5px;top:615px">M4561</span>
<span class="cm" style="left:563.5px;top:657px">Auto</span>
<span class="cm" style="left:563.5px;top:677px">Probe</span>
<span class="cm" style="left:563.5px;top:697px">Change</span>
<span class="cm" style="left:563.5px;top:717px"><b class="k">동작 시작</b></span>
<span class="dv" style="left:677.0px;top:615px">X1083</span>
<span class="cm" style="left:642.5px;top:657px">Auto-</span>
<span class="cm" style="left:642.5px;top:677px">Teach</span>
<span class="cm" style="left:642.5px;top:697px">&nbsp;Mode SW</span>
<span class="dv" style="left:677.0px;top:762px">M10888</span>
<span class="cm" style="left:642.5px;top:804px">PSJ</span>
<span class="dl" style="left:1124px;top:635px">L3120</span>
<span class="cm" style="left:1119.5px;top:657px">Auto<b class="k">모드</b></span>
<span class="cm" style="left:1119.5px;top:677px"><b class="k">변경 가능</b></span>
<svg class="abs" style="left:0;top:0" width="1614" height="851" viewBox="0 0 1614 851" shape-rendering="crispEdges" fill="#000"><rect x="81" y="25" width="1" height="826"/><rect x="1209" y="0" width="1" height="851"/><rect x="115" y="48" width="1" height="20"/><rect x="126" y="48" width="1" height="20"/><rect x="194" y="48" width="1" height="20"/><rect x="206" y="48" width="1" height="20"/><rect x="274" y="48" width="1" height="20"/><rect x="285" y="48" width="1" height="20"/><rect x="279" y="48" width="1" height="20"/><path class="aa" d="M276 53L279.5 48L283 53"/><rect x="353" y="48" width="1" height="20"/><rect x="365" y="48" width="1" height="20"/><rect x="433" y="48" width="1" height="20"/><rect x="444" y="48" width="1" height="20"/><path class="aa" d="M428 68.5L450.5 49"/><rect x="81" y="58" width="34" height="1"/><rect x="127" y="58" width="67" height="1"/><rect x="207" y="58" width="67" height="1"/><rect x="286" y="58" width="67" height="1"/><rect x="366" y="58" width="67" height="1"/><rect x="445" y="58" width="671" height="1"/><rect x="320" y="58" width="1" height="146"/><rect x="399" y="58" width="1" height="294"/><rect x="353" y="194" width="1" height="20"/><rect x="365" y="194" width="1" height="20"/><rect x="320" y="204" width="33" height="1"/><rect x="366" y="204" width="33" height="1"/><rect x="115" y="341" width="1" height="20"/><rect x="126" y="341" width="1" height="20"/><rect x="194" y="341" width="1" height="20"/><rect x="206" y="341" width="1" height="20"/><path class="aa" d="M189 361.5L211.5 342"/><rect x="274" y="341" width="1" height="20"/><rect x="285" y="341" width="1" height="20"/><path class="aa" d="M269 361.5L291.5 342"/><rect x="81" y="351" width="34" height="1"/><rect x="127" y="351" width="67" height="1"/><rect x="207" y="351" width="67" height="1"/><rect x="286" y="351" width="113" height="1"/><path class="aa" d="M1121.5 49Q1112.5 58.5 1121.5 68"/><path class="aa" d="M1201 49Q1210 58.5 1201 68"/><rect x="1206" y="58" width="3" height="1"/><rect x="115" y="488" width="1" height="20"/><rect x="126" y="488" width="1" height="20"/><rect x="81" y="498" width="34" height="1"/><rect x="127" y="498" width="831" height="1"/><rect x="958" y="489" width="1" height="20"/><rect x="958" y="489" width="5" height="1"/><rect x="958" y="508" width="5" height="1"/><rect x="1206" y="489" width="1" height="20"/><rect x="1202" y="489" width="5" height="1"/><rect x="1202" y="508" width="5" height="1"/><rect x="1206" y="498" width="3" height="1"/><rect x="115" y="635" width="1" height="20"/><rect x="126" y="635" width="1" height="20"/><rect x="194" y="635" width="1" height="20"/><rect x="206" y="635" width="1" height="20"/><rect x="274" y="635" width="1" height="20"/><rect x="285" y="635" width="1" height="20"/><path class="aa" d="M269 655.5L291.5 636"/><rect x="353" y="635" width="1" height="20"/><rect x="365" y="635" width="1" height="20"/><path class="aa" d="M348 655.5L370.5 636"/><rect x="433" y="635" width="1" height="20"/><rect x="444" y="635" width="1" height="20"/><path class="aa" d="M428 655.5L450.5 636"/><rect x="512" y="635" width="1" height="20"/><rect x="524" y="635" width="1" height="20"/><path class="aa" d="M507 655.5L529.5 636"/><rect x="591" y="635" width="1" height="20"/><rect x="603" y="635" width="1" height="20"/><path class="aa" d="M586 655.5L608.5 636"/><rect x="671" y="635" width="1" height="20"/><rect x="682" y="635" width="1" height="20"/><rect x="81" y="645" width="34" height="1"/><rect x="127" y="645" width="67" height="1"/><rect x="207" y="645" width="67" height="1"/><rect x="286" y="645" width="67" height="1"/><rect x="366" y="645" width="67" height="1"/><rect x="445" y="645" width="67" height="1"/><rect x="525" y="645" width="66" height="1"/><rect x="604" y="645" width="67" height="1"/><rect x="683" y="645" width="433" height="1"/><rect x="637" y="645" width="1" height="148"/><rect x="717" y="645" width="1" height="148"/><rect x="671" y="782" width="1" height="20"/><rect x="682" y="782" width="1" height="20"/><path class="aa" d="M666 802.5L688.5 783"/><rect x="637" y="792" width="34" height="1"/><rect x="683" y="792" width="34" height="1"/><path class="aa" d="M1121.5 636Q1112.5 645.5 1121.5 655"/><path class="aa" d="M1201 636Q1210 645.5 1201 655"/><rect x="1206" y="645" width="3" height="1"/></svg>
<div id="cursor" style="left:1113px;top:25px"></div>
</div>
<div id="vsb"><div class="thumb" style="left:0;top:38px;width:15px;height:17px"></div>
<svg class="abs" style="left:2px;top:5px" width="11" height="8" viewBox="0 0 11 8"><path d="M1.500 6.500l4-4l4 4" fill="none" stroke="#606060" stroke-width="2"/></svg>
<svg class="abs" style="left:2px;top:838px" width="11" height="8" viewBox="0 0 11 8"><path d="M1.500 1.500l4 4l4-4" fill="none" stroke="#606060" stroke-width="2"/></svg></div>
</div>
<div id="gap"></div>
<div class="cap" style="left:0;top:971px;width:1916px;height:27px"><div class="grip" style="left:1px;top:5px;height:18px"></div><span class="captxt" style="left:10px;top:6px">Output</span>
<svg class="abs" style="left:1882px;top:6px" width="30" height="14" viewBox="0 0 30 14"><path d="M3.500 1.500h4v5h-4zM2 7h7M5.500 7v4" fill="none" stroke="#000" stroke-width="1.300"/><rect x="6" y="2" width="1.500" height="5" fill="#000"/><path d="M18.500 3.500l7 7M25.500 3.500l-7 7" stroke="#000" stroke-width="1.700"/></svg></div>
<div id="status">
<div class="ssep" style="left:857px"></div>
<span class="st " style="left:862px">Korean</span>
<div class="ssep" style="left:965px"></div>
<span class="st " style="left:970px">Unlabeled</span>
<div class="ssep" style="left:1053px"></div>
<div class="ssep" style="left:1301px"></div>
<span class="st " style="left:1306px">Q26UDV</span>
<div class="ssep" style="left:1409px"></div>
<span class="st " style="left:1414px">Host-192.168.3.10</span>
<div class="ssep" style="left:1617px"></div>
<span class="st " style="left:1622px">64/1487Step</span>
<div class="ssep" style="left:1785px"></div>
<span class="st " style="left:1790px">Ovrwrte</span>
<div class="ssep" style="left:1843px"></div>
<span class="st dis" style="left:1848px">大写</span>
<div class="ssep" style="left:1879px"></div>
<span class="st " style="left:1884px">数字</span>
</div>
</body></html>
